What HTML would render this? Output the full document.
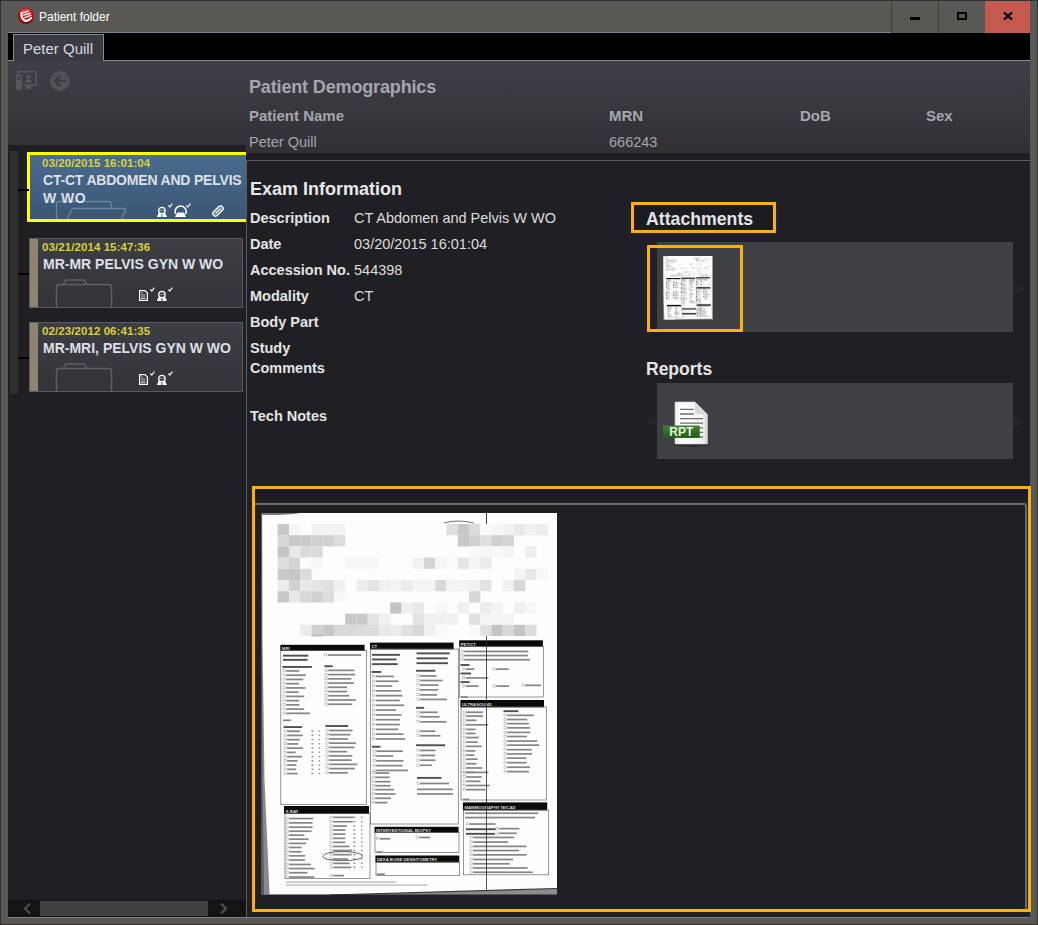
<!DOCTYPE html>
<html><head><meta charset="utf-8">
<style>
*{margin:0;padding:0;box-sizing:border-box}
html,body{width:1038px;height:925px;overflow:hidden;background:#5a5855;font-family:"Liberation Sans",sans-serif}
.a{position:absolute}
.t{position:absolute;white-space:nowrap;line-height:1}
</style></head><body>
<!-- frame -->
<div class="a" style="left:0;top:0;width:1038px;height:925px;border:1px solid #2f3034;background:#5a5855"></div>
<!-- title bar -->
<svg class="a" style="left:18px;top:8px" width="16" height="16" viewBox="0 0 16 16">
 <defs><radialGradient id="rg" cx="0.5" cy="0.3" r="0.75"><stop offset="0" stop-color="#e83a3a"/><stop offset="0.45" stop-color="#cc0a0a"/><stop offset="1" stop-color="#6e0404"/></radialGradient></defs>
 <circle cx="8" cy="8" r="8" fill="url(#rg)"/>
 <ellipse cx="8" cy="2.6" rx="4.5" ry="1.8" fill="#f07070" opacity="0.45"/>
 <path d="M3.6 4.6 Q2.6 9.5 6 12.2 Q9.5 14.2 13.2 10" stroke="#fff" stroke-width="2.2" fill="none" stroke-linecap="round"/>
 <path d="M5.4 4.6 L10.2 3.3 M5.3 7.1 L12.3 5.2 M6.6 9.6 L13 7.3" stroke="#fff" stroke-width="1.5" stroke-linecap="round" opacity="0.9"/>
</svg>
<div class="t" style="left:39px;top:11px;font-size:12px;color:#fff">Patient folder</div>
<div class="a" style="left:891px;top:1px;width:1px;height:32px;background:#3e3d3b"></div>
<div class="a" style="left:938px;top:1px;width:1px;height:32px;background:#3e3d3b"></div>
<div class="a" style="left:985px;top:1px;width:45px;height:32px;background:#c4594f"></div>
<div class="a" style="left:910px;top:17px;width:10px;height:3px;background:#000"></div>
<div class="a" style="left:957px;top:12px;width:10px;height:8px;border:2px solid #000"></div>
<svg class="a" style="left:1003px;top:12px" width="10" height="8" viewBox="0 0 10 8"><path d="M1 0.5 L9 7.5 M9 0.5 L1 7.5" stroke="#000" stroke-width="2.2"/></svg>

<!-- tab strip -->
<div class="a" style="left:8px;top:32px;width:883px;height:1px;background:#7b8692"></div>
<div class="a" style="left:8px;top:33px;width:1022px;height:27px;background:#000"></div>
<div class="a" style="left:8px;top:60px;width:1022px;height:1px;background:#8a8a8c"></div>
<div class="a" style="left:13px;top:34px;width:91px;height:27px;background:#3a3a40;border:1px solid #8a8a8c;border-bottom:none"></div>
<div class="t" style="left:23px;top:41px;font-size:15px;color:#d4dae4">Peter Quill</div>

<!-- content -->
<div class="a" style="left:8px;top:61px;width:1022px;height:856px;background:#202024"></div>
<div class="a" style="left:8px;top:61px;width:1022px;height:92px;background:linear-gradient(#3f3f47,#303035)"></div>
<div class="a" style="left:8px;top:145px;width:238px;height:8px;background:#202024"></div>
<div class="a" style="left:246px;top:153px;width:784px;height:7px;background:#1e1e22"></div>
<div class="a" style="left:246px;top:160px;width:784px;height:1px;background:#5d5c62"></div>
<div class="a" style="left:246px;top:160px;width:1px;height:757px;background:#5d5c62"></div>
<div class="a" style="left:8px;top:917px;width:1022px;height:1px;background:#77818d"></div>

<div id="left" class="a" style="left:0;top:0;width:246px;height:925px;overflow:hidden">
<div class="a" style="left:10px;top:151px;width:8px;height:243px;background:#2f2f30"></div>
<svg class="a" style="left:15px;top:71px" width="22" height="20" viewBox="0 0 22 20"><rect x="3" y="0.8" width="18" height="13.5" rx="1" stroke="#56565c" stroke-width="1.6" fill="none"/><rect x="0.5" y="3" width="7" height="16.3" rx="1.2" fill="#56565c" stroke="#3c3c43" stroke-width="1"/><rect x="2" y="5.5" width="4" height="1.2" fill="#3c3c43"/><rect x="2" y="7.7" width="4" height="1.2" fill="#3c3c43"/><circle cx="13.5" cy="5.8" r="2.2" fill="#56565c"/><path d="M10 11.5 Q10 8.6 13.5 8.6 Q17 8.6 17 11.5 Z" fill="#56565c"/><path d="M11 14.5 H16 L16.8 17.8 H10.2 Z" fill="#56565c"/></svg>
<svg class="a" style="left:50px;top:71px" width="20" height="20" viewBox="0 0 20 20"><circle cx="10" cy="10" r="10" fill="#505057"/><path d="M15.5 10 H5.5 M10 5 L5 10 L10 15" stroke="#3b3b41" stroke-width="2.2" fill="none"/></svg>
<div class="a" style="left:27px;top:152px;width:230px;height:70px;border:3px solid #ffff00;background:linear-gradient(#4b6b8f,#3b5675)"></div>
<div class="a" style="left:18px;top:189px;width:11px;height:2px;background:#000"></div>
<svg class="a" style="left:55px;top:200px" width="75" height="19" viewBox="0 0 75 19"><path d="M1.5 20 V4 Q1.5 1.5 4 1.5 H54 Q56.5 1.5 56.5 4 V7.5" stroke="#6e849c" stroke-width="1.3" fill="none"/><path d="M11.5 20 L16.6 10 Q17.2 8.5 18.7 8.5 H69.5 Q71 8.5 70.5 10 L66 20" stroke="#6e849c" stroke-width="1.3" fill="none"/></svg>
<div class="t" style="left:42px;top:158px;font-size:11.5px;font-weight:bold;color:#d9cf3e;letter-spacing:0.08px">03/20/2015 16:01:04</div>
<div class="t" style="left:43px;top:173px;font-size:14px;font-weight:bold;color:#dde0e6;letter-spacing:-0.2px">CT-CT ABDOMEN AND PELVIS</div>
<div class="t" style="left:43px;top:191px;font-size:14px;font-weight:bold;color:#dde0e6;letter-spacing:0.5px">W WO</div>
<svg class="a" style="left:156px;top:206px" width="12" height="12" viewBox="0 0 12 12"><circle cx="5.9" cy="4.6" r="3.2" stroke="#fff" stroke-width="1.4" fill="none"/><path d="M3.6 4.3 H8.2" stroke="#9aa" stroke-width="0.9"/><path d="M0.8 11 L2.6 7 Q4 8.3 5.4 8.5 V11 Z M11 11 L9.2 7 Q7.8 8.3 6.4 8.5 V11 Z" fill="#fff"/></svg><svg class="a" style="left:168px;top:203px" width="5" height="5" viewBox="0 0 5 5"><path d="M0.4 2.5 L1.8 4 L4.4 0.6" stroke="#f2f2f2" stroke-width="1.2" fill="none"/></svg><svg class="a" style="left:174px;top:205px" width="14" height="13" viewBox="0 0 14 13"><path d="M1.7 9 A5.5 5.5 0 1 1 11.6 9" stroke="#fff" stroke-width="1.5" fill="none"/><path d="M1 12 L3.3 7.6 H10 L12 12 Z" fill="#fff"/></svg><svg class="a" style="left:186px;top:203px" width="5" height="5" viewBox="0 0 5 5"><path d="M0.4 2.5 L1.8 4 L4.4 0.6" stroke="#f2f2f2" stroke-width="1.2" fill="none"/></svg><svg class="a" style="left:212px;top:205px" width="12" height="12" viewBox="0 0 12 12"><g transform="rotate(45 6 6)"><rect x="3.4" y="-0.2" width="5.2" height="12.4" rx="2.6" stroke="#fff" stroke-width="1.3" fill="#9fb0c3" fill-opacity="0.5"/><path d="M6 2.5 V9.5" stroke="#fff" stroke-width="1"/></g></svg>
<div class="a" style="left:29px;top:238px;width:214px;height:70px;border:1px solid #595960;background:linear-gradient(#3d3d44,#333339)"></div>
<div class="a" style="left:30px;top:239px;width:8px;height:68px;background:#8f8474"></div>
<div class="a" style="left:18px;top:273px;width:11px;height:2px;background:#000"></div>
<svg class="a" style="left:55px;top:279px" width="58" height="28" viewBox="0 0 58 28"><path d="M1.5 28 V8 Q1.5 5.5 4 5.5 H54 Q56.5 5.5 56.5 8 V28" stroke="#5f5f64" stroke-width="1.4" fill="none"/><path d="M8.5 5.5 L10 2 Q10.5 1 12 1 H28 Q29.5 1 30 2 L31.5 5.5" stroke="#5f5f64" stroke-width="1.4" fill="none"/></svg>
<div class="t" style="left:42px;top:242px;font-size:11.5px;font-weight:bold;color:#d9cf3e;letter-spacing:0.08px">03/21/2014 15:47:36</div>
<div class="t" style="left:43px;top:257px;font-size:14px;font-weight:bold;color:#dde0e6">MR-MR PELVIS GYN W WO</div>
<svg class="a" style="left:139px;top:290px" width="9" height="11" viewBox="0 0 9 11"><path d="M0.6 0.6 H6 L8.4 3 V10.4 H0.6 Z" stroke="#fff" stroke-width="1.2" fill="none"/><path d="M2 3 H4 M2 5 H6.5 M2 7 H6.5 M2 8.5 H6.5" stroke="#ccc" stroke-width="0.9"/></svg><svg class="a" style="left:150px;top:287px" width="5" height="5" viewBox="0 0 5 5"><path d="M0.4 2.5 L1.8 4 L4.4 0.6" stroke="#f2f2f2" stroke-width="1.2" fill="none"/></svg><svg class="a" style="left:156px;top:290px" width="12" height="12" viewBox="0 0 12 12"><circle cx="5.9" cy="4.6" r="3.2" stroke="#fff" stroke-width="1.4" fill="none"/><path d="M3.6 4.3 H8.2" stroke="#9aa" stroke-width="0.9"/><path d="M0.8 11 L2.6 7 Q4 8.3 5.4 8.5 V11 Z M11 11 L9.2 7 Q7.8 8.3 6.4 8.5 V11 Z" fill="#fff"/></svg><svg class="a" style="left:168px;top:287px" width="5" height="5" viewBox="0 0 5 5"><path d="M0.4 2.5 L1.8 4 L4.4 0.6" stroke="#f2f2f2" stroke-width="1.2" fill="none"/></svg>
<div class="a" style="left:29px;top:322px;width:214px;height:70px;border:1px solid #595960;background:linear-gradient(#3d3d44,#333339)"></div>
<div class="a" style="left:30px;top:323px;width:8px;height:68px;background:#8f8474"></div>
<div class="a" style="left:18px;top:357px;width:11px;height:2px;background:#000"></div>
<svg class="a" style="left:55px;top:363px" width="58" height="28" viewBox="0 0 58 28"><path d="M1.5 28 V8 Q1.5 5.5 4 5.5 H54 Q56.5 5.5 56.5 8 V28" stroke="#5f5f64" stroke-width="1.4" fill="none"/><path d="M8.5 5.5 L10 2 Q10.5 1 12 1 H28 Q29.5 1 30 2 L31.5 5.5" stroke="#5f5f64" stroke-width="1.4" fill="none"/></svg>
<div class="t" style="left:42px;top:326px;font-size:11.5px;font-weight:bold;color:#d9cf3e;letter-spacing:0.08px">02/23/2012 06:41:35</div>
<div class="t" style="left:43px;top:341px;font-size:14px;font-weight:bold;color:#dde0e6">MR-MRI, PELVIS GYN W WO</div>
<svg class="a" style="left:139px;top:374px" width="9" height="11" viewBox="0 0 9 11"><path d="M0.6 0.6 H6 L8.4 3 V10.4 H0.6 Z" stroke="#fff" stroke-width="1.2" fill="none"/><path d="M2 3 H4 M2 5 H6.5 M2 7 H6.5 M2 8.5 H6.5" stroke="#ccc" stroke-width="0.9"/></svg><svg class="a" style="left:150px;top:371px" width="5" height="5" viewBox="0 0 5 5"><path d="M0.4 2.5 L1.8 4 L4.4 0.6" stroke="#f2f2f2" stroke-width="1.2" fill="none"/></svg><svg class="a" style="left:156px;top:374px" width="12" height="12" viewBox="0 0 12 12"><circle cx="5.9" cy="4.6" r="3.2" stroke="#fff" stroke-width="1.4" fill="none"/><path d="M3.6 4.3 H8.2" stroke="#9aa" stroke-width="0.9"/><path d="M0.8 11 L2.6 7 Q4 8.3 5.4 8.5 V11 Z M11 11 L9.2 7 Q7.8 8.3 6.4 8.5 V11 Z" fill="#fff"/></svg><svg class="a" style="left:168px;top:371px" width="5" height="5" viewBox="0 0 5 5"><path d="M0.4 2.5 L1.8 4 L4.4 0.6" stroke="#f2f2f2" stroke-width="1.2" fill="none"/></svg>
<div class="a" style="left:8px;top:900px;width:238px;height:17px;background:#141414"></div>
<div class="a" style="left:40px;top:901px;width:168px;height:15px;background:#404040"></div>
<svg class="a" style="left:22px;top:902px" width="10" height="13" viewBox="0 0 10 13"><path d="M8 1.5 L3 6.5 L8 11.5" stroke="#4f4f4f" stroke-width="2.2" fill="none"/></svg>
<svg class="a" style="left:219px;top:902px" width="10" height="13" viewBox="0 0 10 13"><path d="M2 1.5 L7 6.5 L2 11.5" stroke="#4f4f4f" stroke-width="2.2" fill="none"/></svg>
</div>
<div class="t" style="left:249px;top:78px;font-size:18px;font-weight:700;color:#a6a6ae;letter-spacing:-0.15px">Patient Demographics</div>
<div class="t" style="left:249px;top:108px;font-size:15px;font-weight:700;color:#a6a6ae;">Patient Name</div>
<div class="t" style="left:609px;top:108px;font-size:15px;font-weight:700;color:#a6a6ae;">MRN</div>
<div class="t" style="left:800px;top:108px;font-size:15px;font-weight:700;color:#a6a6ae;">DoB</div>
<div class="t" style="left:926px;top:108px;font-size:15px;font-weight:700;color:#a6a6ae;">Sex</div>
<div class="t" style="left:249px;top:135px;font-size:14.5px;font-weight:400;color:#a6a6ae;">Peter Quill</div>
<div class="t" style="left:609px;top:135px;font-size:14.5px;font-weight:400;color:#a6a6ae;">666243</div>
<div class="t" style="left:250px;top:180px;font-size:18px;font-weight:700;color:#e8e8ea;">Exam Information</div>
<div class="t" style="left:250px;top:211px;font-size:14.5px;font-weight:700;color:#e4e4e6;">Description</div>
<div class="t" style="left:354px;top:211px;font-size:14.5px;font-weight:400;color:#dcdcde;">CT Abdomen and Pelvis W WO</div>
<div class="t" style="left:250px;top:237px;font-size:14.5px;font-weight:700;color:#e4e4e6;">Date</div>
<div class="t" style="left:354px;top:237px;font-size:14.5px;font-weight:400;color:#dcdcde;">03/20/2015 16:01:04</div>
<div class="t" style="left:250px;top:263px;font-size:14.5px;font-weight:700;color:#e4e4e6;">Accession No.</div>
<div class="t" style="left:354px;top:263px;font-size:14.5px;font-weight:400;color:#dcdcde;">544398</div>
<div class="t" style="left:250px;top:289px;font-size:14.5px;font-weight:700;color:#e4e4e6;">Modality</div>
<div class="t" style="left:354px;top:289px;font-size:14.5px;font-weight:400;color:#dcdcde;">CT</div>
<div class="t" style="left:250px;top:315px;font-size:14.5px;font-weight:700;color:#e4e4e6;">Body Part</div>
<div class="t" style="left:250px;top:341px;font-size:14.5px;font-weight:700;color:#e4e4e6;">Study</div>
<div class="t" style="left:250px;top:361px;font-size:14.5px;font-weight:700;color:#e4e4e6;">Comments</div>
<div class="t" style="left:250px;top:409px;font-size:14.5px;font-weight:700;color:#e4e4e6;">Tech Notes</div>
<div class="a" style="left:631px;top:202px;width:145px;height:31px;border:3px solid #fcb00a;background:#1c1c20"></div>
<div class="t" style="left:646px;top:211px;font-size:17.7px;font-weight:700;color:#e4e4e6;">Attachments</div>
<div class="a" style="left:657px;top:242px;width:356px;height:90px;background:#3f3f46"></div>
<div class="a" style="left:647px;top:245px;width:96px;height:87px;border:3px solid #fcb00a"></div>
<svg class="a" style="left:663px;top:256px" width="49.5" height="64" viewBox="0 0 296 383" preserveAspectRatio="none"><rect x="0.00" y="0.00" width="296.00" height="383.00" fill="#fdfdfd"/>
<rect x="16.70" y="11.00" width="11.30" height="11.25" fill="#c8c8c8"/>
<rect x="27.95" y="11.00" width="11.30" height="11.25" fill="#f5f5f5"/>
<rect x="50.45" y="11.00" width="11.30" height="11.25" fill="#f3f3f3"/>
<rect x="61.70" y="11.00" width="11.30" height="11.25" fill="#f3f3f3"/>
<rect x="72.95" y="11.00" width="11.30" height="11.25" fill="#f3f3f3"/>
<rect x="185.45" y="11.00" width="11.30" height="11.25" fill="#dedede"/>
<rect x="196.70" y="11.00" width="11.30" height="11.25" fill="#c8c8c8"/>
<rect x="207.95" y="11.00" width="11.30" height="11.25" fill="#dcdcdc"/>
<rect x="219.20" y="11.00" width="11.30" height="11.25" fill="#fafafa"/>
<rect x="230.45" y="11.00" width="11.30" height="11.25" fill="#f6f6f6"/>
<rect x="241.70" y="11.00" width="11.30" height="11.25" fill="#f2f2f2"/>
<rect x="252.95" y="11.00" width="11.30" height="11.25" fill="#e8e8e8"/>
<rect x="264.20" y="11.00" width="11.30" height="11.25" fill="#f0f0f0"/>
<rect x="275.45" y="11.00" width="11.30" height="11.25" fill="#ececec"/>
<rect x="16.70" y="22.20" width="11.30" height="11.25" fill="#d8d8d8"/>
<rect x="27.95" y="22.20" width="11.30" height="11.25" fill="#c8c8c8"/>
<rect x="39.20" y="22.20" width="11.30" height="11.25" fill="#cacaca"/>
<rect x="50.45" y="22.20" width="11.30" height="11.25" fill="#d0d0d0"/>
<rect x="61.70" y="22.20" width="11.30" height="11.25" fill="#d0d0d0"/>
<rect x="72.95" y="22.20" width="11.30" height="11.25" fill="#dcdcdc"/>
<rect x="196.70" y="22.20" width="11.30" height="11.25" fill="#c8c8c8"/>
<rect x="207.95" y="22.20" width="11.30" height="11.25" fill="#d0d0d0"/>
<rect x="219.20" y="22.20" width="11.30" height="11.25" fill="#e0e0e0"/>
<rect x="230.45" y="22.20" width="11.30" height="11.25" fill="#d0d0d0"/>
<rect x="241.70" y="22.20" width="11.30" height="11.25" fill="#d4d4d4"/>
<rect x="16.70" y="33.40" width="11.30" height="11.25" fill="#c4c4c4"/>
<rect x="27.95" y="33.40" width="11.30" height="11.25" fill="#e8e8e8"/>
<rect x="39.20" y="33.40" width="11.30" height="11.25" fill="#dadada"/>
<rect x="50.45" y="33.40" width="11.30" height="11.25" fill="#dadada"/>
<rect x="207.95" y="33.40" width="11.30" height="11.25" fill="#fafafa"/>
<rect x="219.20" y="33.40" width="11.30" height="11.25" fill="#f6f6f6"/>
<rect x="230.45" y="33.40" width="11.30" height="11.25" fill="#f8f8f8"/>
<rect x="241.70" y="33.40" width="11.30" height="11.25" fill="#f4f4f4"/>
<rect x="264.20" y="33.40" width="11.30" height="11.25" fill="#eeeeee"/>
<rect x="16.70" y="44.60" width="11.30" height="11.25" fill="#dedede"/>
<rect x="27.95" y="44.60" width="11.30" height="11.25" fill="#d4d4d4"/>
<rect x="39.20" y="44.60" width="11.30" height="11.25" fill="#fcfcfc"/>
<rect x="50.45" y="44.60" width="11.30" height="11.25" fill="#f6f6f6"/>
<rect x="84.20" y="44.60" width="11.30" height="11.25" fill="#f6f6f6"/>
<rect x="95.45" y="44.60" width="11.30" height="11.25" fill="#f6f6f6"/>
<rect x="106.70" y="44.60" width="11.30" height="11.25" fill="#f6f6f6"/>
<rect x="151.70" y="44.60" width="11.30" height="11.25" fill="#f2f2f2"/>
<rect x="162.95" y="44.60" width="11.30" height="11.25" fill="#d4d4d4"/>
<rect x="174.20" y="44.60" width="11.30" height="11.25" fill="#f6f6f6"/>
<rect x="185.45" y="44.60" width="11.30" height="11.25" fill="#fafafa"/>
<rect x="196.70" y="44.60" width="11.30" height="11.25" fill="#e6e6e6"/>
<rect x="207.95" y="44.60" width="11.30" height="11.25" fill="#f4f4f4"/>
<rect x="219.20" y="44.60" width="11.30" height="11.25" fill="#ececec"/>
<rect x="16.70" y="55.80" width="11.30" height="11.25" fill="#cacaca"/>
<rect x="27.95" y="55.80" width="11.30" height="11.25" fill="#c6c6c6"/>
<rect x="39.20" y="55.80" width="11.30" height="11.25" fill="#dadada"/>
<rect x="252.95" y="55.80" width="11.30" height="11.25" fill="#f4f4f4"/>
<rect x="264.20" y="55.80" width="11.30" height="11.25" fill="#e8e8e8"/>
<rect x="275.45" y="55.80" width="11.30" height="11.25" fill="#f8f8f8"/>
<rect x="16.70" y="67.00" width="11.30" height="11.25" fill="#ececec"/>
<rect x="27.95" y="67.00" width="11.30" height="11.25" fill="#d0d0d0"/>
<rect x="39.20" y="67.00" width="11.30" height="11.25" fill="#e8e8e8"/>
<rect x="50.45" y="67.00" width="11.30" height="11.25" fill="#e4e4e4"/>
<rect x="61.70" y="67.00" width="11.30" height="11.25" fill="#e0e0e0"/>
<rect x="72.95" y="67.00" width="11.30" height="11.25" fill="#f0f0f0"/>
<rect x="95.45" y="67.00" width="11.30" height="11.25" fill="#eeeeee"/>
<rect x="106.70" y="67.00" width="11.30" height="11.25" fill="#e4e4e4"/>
<rect x="117.95" y="67.00" width="11.30" height="11.25" fill="#f0f0f0"/>
<rect x="129.20" y="67.00" width="11.30" height="11.25" fill="#f4f4f4"/>
<rect x="140.45" y="67.00" width="11.30" height="11.25" fill="#ececec"/>
<rect x="151.70" y="67.00" width="11.30" height="11.25" fill="#f4f4f4"/>
<rect x="162.95" y="67.00" width="11.30" height="11.25" fill="#f4f4f4"/>
<rect x="174.20" y="67.00" width="11.30" height="11.25" fill="#d8d8d8"/>
<rect x="185.45" y="67.00" width="11.30" height="11.25" fill="#f4f4f4"/>
<rect x="196.70" y="67.00" width="11.30" height="11.25" fill="#f4f4f4"/>
<rect x="207.95" y="67.00" width="11.30" height="11.25" fill="#f2f2f2"/>
<rect x="219.20" y="67.00" width="11.30" height="11.25" fill="#e2e2e2"/>
<rect x="241.70" y="67.00" width="11.30" height="11.25" fill="#f0f0f0"/>
<rect x="252.95" y="67.00" width="11.30" height="11.25" fill="#d8d8d8"/>
<rect x="16.70" y="78.20" width="11.30" height="11.25" fill="#c8c8c8"/>
<rect x="27.95" y="78.20" width="11.30" height="11.25" fill="#e8e8e8"/>
<rect x="39.20" y="78.20" width="11.30" height="11.25" fill="#d8d8d8"/>
<rect x="50.45" y="78.20" width="11.30" height="11.25" fill="#d0d0d0"/>
<rect x="61.70" y="78.20" width="11.30" height="11.25" fill="#dcdcdc"/>
<rect x="72.95" y="78.20" width="11.30" height="11.25" fill="#f8f8f8"/>
<rect x="207.95" y="78.20" width="11.30" height="11.25" fill="#d8d8d8"/>
<rect x="129.20" y="89.40" width="11.30" height="11.25" fill="#c4c4c4"/>
<rect x="140.45" y="89.40" width="11.30" height="11.25" fill="#f0f0f0"/>
<rect x="151.70" y="89.40" width="11.30" height="11.25" fill="#e8e8e8"/>
<rect x="174.20" y="89.40" width="11.30" height="11.25" fill="#f6f6f6"/>
<rect x="196.70" y="89.40" width="11.30" height="11.25" fill="#f0f0f0"/>
<rect x="219.20" y="89.40" width="11.30" height="11.25" fill="#ececec"/>
<rect x="230.45" y="89.40" width="11.30" height="11.25" fill="#f4f4f4"/>
<rect x="252.95" y="89.40" width="11.30" height="11.25" fill="#f0f0f0"/>
<rect x="264.20" y="89.40" width="11.30" height="11.25" fill="#f8f8f8"/>
<rect x="84.20" y="100.60" width="11.30" height="11.25" fill="#c8c8c8"/>
<rect x="95.45" y="100.60" width="11.30" height="11.25" fill="#c8c8c8"/>
<rect x="106.70" y="100.60" width="11.30" height="11.25" fill="#e4e4e4"/>
<rect x="117.95" y="100.60" width="11.30" height="11.25" fill="#f0f0f0"/>
<rect x="151.70" y="100.60" width="11.30" height="11.25" fill="#e4e4e4"/>
<rect x="162.95" y="100.60" width="11.30" height="11.25" fill="#f0f0f0"/>
<rect x="174.20" y="100.60" width="11.30" height="11.25" fill="#f0f0f0"/>
<rect x="185.45" y="100.60" width="11.30" height="11.25" fill="#f0f0f0"/>
<rect x="207.95" y="100.60" width="11.30" height="11.25" fill="#e0e0e0"/>
<rect x="219.20" y="100.60" width="11.30" height="11.25" fill="#f4f4f4"/>
<rect x="230.45" y="100.60" width="11.30" height="11.25" fill="#f4f4f4"/>
<rect x="241.70" y="100.60" width="11.30" height="11.25" fill="#f4f4f4"/>
<rect x="39.20" y="111.80" width="11.30" height="11.25" fill="#ececec"/>
<rect x="50.45" y="111.80" width="11.30" height="11.25" fill="#d0d0d0"/>
<rect x="61.70" y="111.80" width="11.30" height="11.25" fill="#c8c8c8"/>
<rect x="72.95" y="111.80" width="11.30" height="11.25" fill="#d8d8d8"/>
<rect x="84.20" y="111.80" width="11.30" height="11.25" fill="#d8d8d8"/>
<rect x="95.45" y="111.80" width="11.30" height="11.25" fill="#dcdcdc"/>
<rect x="106.70" y="111.80" width="11.30" height="11.25" fill="#dcdcdc"/>
<rect x="117.95" y="111.80" width="11.30" height="11.25" fill="#e8e8e8"/>
<rect x="129.20" y="111.80" width="11.30" height="11.25" fill="#ececec"/>
<rect x="140.45" y="111.80" width="11.30" height="11.25" fill="#e0e0e0"/>
<rect x="151.70" y="111.80" width="11.30" height="11.25" fill="#d8d8d8"/>
<rect x="162.95" y="111.80" width="11.30" height="11.25" fill="#f0f0f0"/>
<rect x="174.20" y="111.80" width="11.30" height="11.25" fill="#fafafa"/>
<rect x="207.95" y="111.80" width="11.30" height="11.25" fill="#fafafa"/>
<rect x="219.20" y="111.80" width="11.30" height="11.25" fill="#e0e0e0"/>
<rect x="230.45" y="111.80" width="11.30" height="11.25" fill="#c4c4c4"/>
<rect x="241.70" y="111.80" width="11.30" height="11.25" fill="#d8d8d8"/>
<rect x="252.95" y="111.80" width="11.30" height="11.25" fill="#c4c4c4"/>
<rect x="264.20" y="111.80" width="11.30" height="11.25" fill="#dcdcdc"/>
<rect x="50.45" y="121.80" width="11.25" height="1.60" fill="#b8b8b8"/>
<line x1="225.50" y1="0.00" x2="225.50" y2="11.00" stroke="#222" stroke-width="0.9"/>
<path d="M183 10 Q197 6 213 10" fill="none" stroke="#333" stroke-width="0.7"/>
<rect x="19.30" y="131.80" width="84.30" height="6.20" fill="#0a0a0a"/>

<rect x="19.80" y="137.50" width="85.70" height="154.20" fill="none" stroke="#6a6a6a" stroke-width="0.7"/>
<rect x="22.00" y="141.70" width="25.30" height="1.90" fill="#505050"/>
<rect x="22.00" y="145.90" width="24.60" height="1.90" fill="#505050"/>
<rect x="21.50" y="153.00" width="29.30" height="1.90" fill="#505050"/>
<rect x="22.00" y="156.71" width="2.2" height="2.2" fill="none" stroke="#909090" stroke-width="0.45"/>
<rect x="25.20" y="157.11" width="13.01" height="1.70" fill="#858585"/>
<rect x="22.00" y="160.95" width="2.2" height="2.2" fill="none" stroke="#909090" stroke-width="0.45"/>
<rect x="25.20" y="161.35" width="19.50" height="1.70" fill="#858585"/>
<rect x="22.00" y="165.19" width="2.2" height="2.2" fill="none" stroke="#909090" stroke-width="0.45"/>
<rect x="25.20" y="165.59" width="17.12" height="1.70" fill="#858585"/>
<rect x="22.00" y="169.43" width="2.2" height="2.2" fill="none" stroke="#909090" stroke-width="0.45"/>
<rect x="25.20" y="169.83" width="12.81" height="1.70" fill="#858585"/>
<rect x="22.00" y="173.67" width="2.2" height="2.2" fill="none" stroke="#909090" stroke-width="0.45"/>
<rect x="25.20" y="174.07" width="19.10" height="1.70" fill="#858585"/>
<rect x="22.00" y="177.90" width="2.2" height="2.2" fill="none" stroke="#909090" stroke-width="0.45"/>
<rect x="25.20" y="178.30" width="12.52" height="1.70" fill="#858585"/>
<rect x="22.00" y="182.14" width="2.2" height="2.2" fill="none" stroke="#909090" stroke-width="0.45"/>
<rect x="25.20" y="182.54" width="18.07" height="1.70" fill="#858585"/>
<rect x="22.00" y="186.38" width="2.2" height="2.2" fill="none" stroke="#909090" stroke-width="0.45"/>
<rect x="25.20" y="186.78" width="12.98" height="1.70" fill="#858585"/>
<rect x="22.00" y="190.62" width="2.2" height="2.2" fill="none" stroke="#909090" stroke-width="0.45"/>
<rect x="25.20" y="191.02" width="13.27" height="1.70" fill="#858585"/>
<rect x="22.00" y="194.86" width="2.2" height="2.2" fill="none" stroke="#909090" stroke-width="0.45"/>
<rect x="25.20" y="195.26" width="17.94" height="1.70" fill="#858585"/>
<rect x="22.00" y="199.09" width="2.2" height="2.2" fill="none" stroke="#909090" stroke-width="0.45"/>
<rect x="25.20" y="199.49" width="23.58" height="1.70" fill="#858585"/>
<rect x="22.00" y="206.46" width="8.12" height="1.70" fill="#858585"/>
<rect x="22.50" y="213.12" width="18.45" height="1.90" fill="#505050"/>
<rect x="23.00" y="216.95" width="2.2" height="2.2" fill="none" stroke="#909090" stroke-width="0.45"/>
<rect x="26.20" y="217.35" width="13.02" height="1.70" fill="#858585"/>
<rect x="23.00" y="221.19" width="2.2" height="2.2" fill="none" stroke="#909090" stroke-width="0.45"/>
<rect x="26.20" y="221.59" width="15.58" height="1.70" fill="#858585"/>
<rect x="23.00" y="225.43" width="2.2" height="2.2" fill="none" stroke="#909090" stroke-width="0.45"/>
<rect x="26.20" y="225.83" width="12.62" height="1.70" fill="#858585"/>
<rect x="23.00" y="229.67" width="2.2" height="2.2" fill="none" stroke="#909090" stroke-width="0.45"/>
<rect x="26.20" y="230.07" width="11.17" height="1.70" fill="#858585"/>
<rect x="23.00" y="233.91" width="2.2" height="2.2" fill="none" stroke="#909090" stroke-width="0.45"/>
<rect x="26.20" y="234.31" width="15.81" height="1.70" fill="#858585"/>
<rect x="23.00" y="238.14" width="2.2" height="2.2" fill="none" stroke="#909090" stroke-width="0.45"/>
<rect x="26.20" y="238.54" width="8.37" height="1.70" fill="#858585"/>
<rect x="23.00" y="242.38" width="2.2" height="2.2" fill="none" stroke="#909090" stroke-width="0.45"/>
<rect x="26.20" y="242.78" width="14.87" height="1.70" fill="#858585"/>
<rect x="23.00" y="246.62" width="2.2" height="2.2" fill="none" stroke="#909090" stroke-width="0.45"/>
<rect x="26.20" y="247.02" width="10.32" height="1.70" fill="#858585"/>
<rect x="23.00" y="250.86" width="2.2" height="2.2" fill="none" stroke="#909090" stroke-width="0.45"/>
<rect x="26.20" y="251.26" width="9.15" height="1.70" fill="#858585"/>
<rect x="23.00" y="255.09" width="2.2" height="2.2" fill="none" stroke="#909090" stroke-width="0.45"/>
<rect x="26.20" y="255.49" width="8.94" height="1.70" fill="#858585"/>
<rect x="23.00" y="259.33" width="2.2" height="2.2" fill="none" stroke="#909090" stroke-width="0.45"/>
<rect x="26.20" y="259.73" width="10.47" height="1.70" fill="#858585"/>
<rect x="50.50" y="217.35" width="1.80" height="1.50" fill="#8a8a8a"/>
<rect x="57.50" y="217.35" width="1.60" height="1.50" fill="#a0a0a0"/>
<rect x="50.50" y="221.59" width="1.80" height="1.50" fill="#8a8a8a"/>
<rect x="57.50" y="221.59" width="1.60" height="1.50" fill="#a0a0a0"/>
<rect x="50.50" y="225.83" width="1.80" height="1.50" fill="#8a8a8a"/>
<rect x="57.50" y="225.83" width="1.60" height="1.50" fill="#a0a0a0"/>
<rect x="50.50" y="230.07" width="1.80" height="1.50" fill="#8a8a8a"/>
<rect x="57.50" y="230.07" width="1.60" height="1.50" fill="#a0a0a0"/>
<rect x="50.50" y="234.31" width="1.80" height="1.50" fill="#8a8a8a"/>
<rect x="57.50" y="234.31" width="1.60" height="1.50" fill="#a0a0a0"/>
<rect x="50.50" y="238.54" width="1.80" height="1.50" fill="#8a8a8a"/>
<rect x="57.50" y="238.54" width="1.60" height="1.50" fill="#a0a0a0"/>
<rect x="50.50" y="242.78" width="1.80" height="1.50" fill="#8a8a8a"/>
<rect x="57.50" y="242.78" width="1.60" height="1.50" fill="#a0a0a0"/>
<rect x="50.50" y="247.02" width="1.80" height="1.50" fill="#8a8a8a"/>
<rect x="57.50" y="247.02" width="1.60" height="1.50" fill="#a0a0a0"/>
<rect x="50.50" y="251.26" width="1.80" height="1.50" fill="#8a8a8a"/>
<rect x="57.50" y="251.26" width="1.60" height="1.50" fill="#a0a0a0"/>
<rect x="50.50" y="255.49" width="1.80" height="1.50" fill="#8a8a8a"/>
<rect x="57.50" y="255.49" width="1.60" height="1.50" fill="#a0a0a0"/>
<rect x="50.50" y="259.73" width="1.80" height="1.50" fill="#8a8a8a"/>
<rect x="57.50" y="259.73" width="1.60" height="1.50" fill="#a0a0a0"/>
<rect x="63.50" y="140.80" width="2.2" height="2.2" fill="none" stroke="#909090" stroke-width="0.45"/>
<rect x="66.70" y="141.20" width="33.63" height="1.70" fill="#858585"/>
<rect x="63.50" y="152.27" width="8.18" height="1.90" fill="#505050"/>
<rect x="64.00" y="156.11" width="2.2" height="2.2" fill="none" stroke="#909090" stroke-width="0.45"/>
<rect x="67.20" y="156.51" width="26.14" height="1.70" fill="#858585"/>
<rect x="64.00" y="160.35" width="2.2" height="2.2" fill="none" stroke="#909090" stroke-width="0.45"/>
<rect x="67.20" y="160.75" width="26.94" height="1.70" fill="#858585"/>
<rect x="64.00" y="164.58" width="2.2" height="2.2" fill="none" stroke="#909090" stroke-width="0.45"/>
<rect x="67.20" y="164.98" width="23.21" height="1.70" fill="#858585"/>
<rect x="64.00" y="168.82" width="2.2" height="2.2" fill="none" stroke="#909090" stroke-width="0.45"/>
<rect x="67.20" y="169.22" width="25.67" height="1.70" fill="#858585"/>
<rect x="64.00" y="173.06" width="2.2" height="2.2" fill="none" stroke="#909090" stroke-width="0.45"/>
<rect x="67.20" y="173.46" width="18.88" height="1.70" fill="#858585"/>
<rect x="64.00" y="177.30" width="2.2" height="2.2" fill="none" stroke="#909090" stroke-width="0.45"/>
<rect x="67.20" y="177.70" width="18.83" height="1.70" fill="#858585"/>
<rect x="64.00" y="181.54" width="2.2" height="2.2" fill="none" stroke="#909090" stroke-width="0.45"/>
<rect x="67.20" y="181.94" width="20.88" height="1.70" fill="#858585"/>
<rect x="64.00" y="185.77" width="2.2" height="2.2" fill="none" stroke="#909090" stroke-width="0.45"/>
<rect x="67.20" y="186.17" width="27.53" height="1.70" fill="#858585"/>
<rect x="64.00" y="190.01" width="2.2" height="2.2" fill="none" stroke="#909090" stroke-width="0.45"/>
<rect x="67.20" y="190.41" width="23.99" height="1.70" fill="#858585"/>
<rect x="64.50" y="212.06" width="22.63" height="1.90" fill="#505050"/>
<rect x="65.00" y="216.20" width="2.2" height="2.2" fill="none" stroke="#909090" stroke-width="0.45"/>
<rect x="68.20" y="216.60" width="23.37" height="1.70" fill="#858585"/>
<rect x="65.00" y="220.43" width="2.2" height="2.2" fill="none" stroke="#909090" stroke-width="0.45"/>
<rect x="68.20" y="220.83" width="21.25" height="1.70" fill="#858585"/>
<rect x="65.00" y="224.67" width="2.2" height="2.2" fill="none" stroke="#909090" stroke-width="0.45"/>
<rect x="68.20" y="225.07" width="18.80" height="1.70" fill="#858585"/>
<rect x="65.00" y="228.91" width="2.2" height="2.2" fill="none" stroke="#909090" stroke-width="0.45"/>
<rect x="68.20" y="229.31" width="26.71" height="1.70" fill="#858585"/>
<rect x="65.00" y="233.15" width="2.2" height="2.2" fill="none" stroke="#909090" stroke-width="0.45"/>
<rect x="68.20" y="233.55" width="25.18" height="1.70" fill="#858585"/>
<rect x="65.00" y="237.39" width="2.2" height="2.2" fill="none" stroke="#909090" stroke-width="0.45"/>
<rect x="68.20" y="237.79" width="17.91" height="1.70" fill="#858585"/>
<rect x="65.00" y="241.62" width="2.2" height="2.2" fill="none" stroke="#909090" stroke-width="0.45"/>
<rect x="68.20" y="242.02" width="23.19" height="1.70" fill="#858585"/>
<rect x="65.00" y="245.86" width="2.2" height="2.2" fill="none" stroke="#909090" stroke-width="0.45"/>
<rect x="68.20" y="246.26" width="22.40" height="1.70" fill="#858585"/>
<rect x="65.00" y="250.10" width="2.2" height="2.2" fill="none" stroke="#909090" stroke-width="0.45"/>
<rect x="68.20" y="250.50" width="28.00" height="1.70" fill="#858585"/>
<rect x="65.00" y="254.34" width="2.2" height="2.2" fill="none" stroke="#909090" stroke-width="0.45"/>
<rect x="68.20" y="254.74" width="25.67" height="1.70" fill="#858585"/>
<rect x="65.00" y="258.58" width="2.2" height="2.2" fill="none" stroke="#909090" stroke-width="0.45"/>
<rect x="68.20" y="258.98" width="18.61" height="1.70" fill="#858585"/>
<rect x="109.00" y="129.60" width="83.60" height="6.80" fill="#0a0a0a"/>

<rect x="109.50" y="136.00" width="87.80" height="175.00" fill="none" stroke="#6a6a6a" stroke-width="0.7"/>
<rect x="111.00" y="140.90" width="27.92" height="1.90" fill="#505050"/>
<rect x="111.00" y="145.50" width="24.47" height="1.90" fill="#505050"/>
<rect x="111.00" y="150.20" width="25.67" height="1.90" fill="#505050"/>
<rect x="110.50" y="158.02" width="9.76" height="1.90" fill="#505050"/>
<rect x="111.50" y="162.16" width="2.2" height="2.2" fill="none" stroke="#909090" stroke-width="0.45"/>
<rect x="114.70" y="162.56" width="18.13" height="1.70" fill="#858585"/>
<rect x="111.50" y="166.98" width="2.2" height="2.2" fill="none" stroke="#909090" stroke-width="0.45"/>
<rect x="114.70" y="167.38" width="22.85" height="1.70" fill="#858585"/>
<rect x="111.50" y="171.79" width="2.2" height="2.2" fill="none" stroke="#909090" stroke-width="0.45"/>
<rect x="114.70" y="172.19" width="16.55" height="1.70" fill="#858585"/>
<rect x="111.50" y="176.60" width="2.2" height="2.2" fill="none" stroke="#909090" stroke-width="0.45"/>
<rect x="114.70" y="177.00" width="25.36" height="1.70" fill="#858585"/>
<rect x="111.50" y="181.42" width="2.2" height="2.2" fill="none" stroke="#909090" stroke-width="0.45"/>
<rect x="114.70" y="181.82" width="26.70" height="1.70" fill="#858585"/>
<rect x="111.50" y="186.23" width="2.2" height="2.2" fill="none" stroke="#909090" stroke-width="0.45"/>
<rect x="114.70" y="186.63" width="24.02" height="1.70" fill="#858585"/>
<rect x="111.50" y="191.04" width="2.2" height="2.2" fill="none" stroke="#909090" stroke-width="0.45"/>
<rect x="114.70" y="191.44" width="28.26" height="1.70" fill="#858585"/>
<rect x="111.50" y="195.85" width="2.2" height="2.2" fill="none" stroke="#909090" stroke-width="0.45"/>
<rect x="114.70" y="196.25" width="20.39" height="1.70" fill="#858585"/>
<rect x="111.50" y="200.67" width="2.2" height="2.2" fill="none" stroke="#909090" stroke-width="0.45"/>
<rect x="114.70" y="201.07" width="25.73" height="1.70" fill="#858585"/>
<rect x="111.50" y="205.48" width="2.2" height="2.2" fill="none" stroke="#909090" stroke-width="0.45"/>
<rect x="114.70" y="205.88" width="24.32" height="1.70" fill="#858585"/>
<rect x="111.50" y="210.29" width="2.2" height="2.2" fill="none" stroke="#909090" stroke-width="0.45"/>
<rect x="114.70" y="210.69" width="24.12" height="1.70" fill="#858585"/>
<rect x="111.50" y="215.11" width="2.2" height="2.2" fill="none" stroke="#909090" stroke-width="0.45"/>
<rect x="114.70" y="215.51" width="22.39" height="1.70" fill="#858585"/>
<rect x="111.50" y="219.92" width="2.2" height="2.2" fill="none" stroke="#909090" stroke-width="0.45"/>
<rect x="114.70" y="220.32" width="27.76" height="1.70" fill="#858585"/>
<rect x="111.50" y="224.73" width="2.2" height="2.2" fill="none" stroke="#909090" stroke-width="0.45"/>
<rect x="114.70" y="225.13" width="29.23" height="1.70" fill="#858585"/>
<rect x="111.00" y="232.79" width="8.47" height="1.90" fill="#505050"/>
<rect x="112.00" y="236.93" width="2.2" height="2.2" fill="none" stroke="#909090" stroke-width="0.45"/>
<rect x="115.20" y="237.33" width="26.63" height="1.70" fill="#858585"/>
<rect x="112.00" y="241.75" width="2.2" height="2.2" fill="none" stroke="#909090" stroke-width="0.45"/>
<rect x="115.20" y="242.15" width="16.97" height="1.70" fill="#858585"/>
<rect x="112.00" y="246.56" width="2.2" height="2.2" fill="none" stroke="#909090" stroke-width="0.45"/>
<rect x="115.20" y="246.96" width="27.22" height="1.70" fill="#858585"/>
<rect x="112.00" y="251.37" width="2.2" height="2.2" fill="none" stroke="#909090" stroke-width="0.45"/>
<rect x="115.20" y="251.77" width="26.35" height="1.70" fill="#858585"/>
<rect x="112.00" y="256.18" width="2.2" height="2.2" fill="none" stroke="#909090" stroke-width="0.45"/>
<rect x="115.20" y="256.58" width="31.89" height="1.70" fill="#858585"/>
<rect x="155.50" y="139.41" width="33.29" height="1.90" fill="#505050"/>
<rect x="155.50" y="144.40" width="31.14" height="1.90" fill="#505050"/>
<rect x="155.50" y="149.24" width="31.54" height="1.90" fill="#505050"/>
<rect x="155.00" y="156.81" width="19.34" height="1.90" fill="#505050"/>
<rect x="156.00" y="161.71" width="2.2" height="2.2" fill="none" stroke="#909090" stroke-width="0.45"/>
<rect x="159.20" y="162.11" width="16.32" height="1.70" fill="#858585"/>
<rect x="156.00" y="166.25" width="2.2" height="2.2" fill="none" stroke="#909090" stroke-width="0.45"/>
<rect x="159.20" y="166.65" width="22.46" height="1.70" fill="#858585"/>
<rect x="156.00" y="170.79" width="2.2" height="2.2" fill="none" stroke="#909090" stroke-width="0.45"/>
<rect x="159.20" y="171.19" width="18.35" height="1.70" fill="#858585"/>
<rect x="156.00" y="175.63" width="2.2" height="2.2" fill="none" stroke="#909090" stroke-width="0.45"/>
<rect x="159.20" y="176.03" width="17.64" height="1.70" fill="#858585"/>
<rect x="156.00" y="180.63" width="2.2" height="2.2" fill="none" stroke="#909090" stroke-width="0.45"/>
<rect x="159.20" y="181.03" width="16.83" height="1.70" fill="#858585"/>
<rect x="156.00" y="185.17" width="2.2" height="2.2" fill="none" stroke="#909090" stroke-width="0.45"/>
<rect x="159.20" y="185.57" width="26.76" height="1.70" fill="#858585"/>
<rect x="155.00" y="193.89" width="8.13" height="1.90" fill="#505050"/>
<rect x="156.00" y="198.03" width="2.2" height="2.2" fill="none" stroke="#909090" stroke-width="0.45"/>
<rect x="159.20" y="198.43" width="17.47" height="1.70" fill="#858585"/>
<rect x="156.00" y="202.57" width="2.2" height="2.2" fill="none" stroke="#909090" stroke-width="0.45"/>
<rect x="159.20" y="202.97" width="19.47" height="1.70" fill="#858585"/>
<rect x="156.00" y="207.57" width="2.2" height="2.2" fill="none" stroke="#909090" stroke-width="0.45"/>
<rect x="159.20" y="207.97" width="26.20" height="1.70" fill="#858585"/>
<rect x="156.00" y="216.95" width="2.2" height="2.2" fill="none" stroke="#909090" stroke-width="0.45"/>
<rect x="159.20" y="217.35" width="15.13" height="1.70" fill="#858585"/>
<rect x="156.00" y="221.49" width="2.2" height="2.2" fill="none" stroke="#909090" stroke-width="0.45"/>
<rect x="159.20" y="221.89" width="20.29" height="1.70" fill="#858585"/>
<rect x="155.00" y="231.28" width="29.10" height="1.90" fill="#505050"/>
<rect x="156.00" y="236.18" width="2.2" height="2.2" fill="none" stroke="#909090" stroke-width="0.45"/>
<rect x="159.20" y="236.58" width="15.30" height="1.70" fill="#858585"/>
<rect x="156.00" y="241.17" width="2.2" height="2.2" fill="none" stroke="#909090" stroke-width="0.45"/>
<rect x="159.20" y="241.57" width="14.92" height="1.70" fill="#858585"/>
<rect x="156.00" y="246.01" width="2.2" height="2.2" fill="none" stroke="#909090" stroke-width="0.45"/>
<rect x="159.20" y="246.41" width="15.18" height="1.70" fill="#858585"/>
<rect x="156.00" y="251.01" width="2.2" height="2.2" fill="none" stroke="#909090" stroke-width="0.45"/>
<rect x="159.20" y="251.41" width="11.67" height="1.70" fill="#858585"/>
<rect x="156.00" y="263.94" width="24.42" height="1.90" fill="#505050"/>
<rect x="156.00" y="269.24" width="2.2" height="2.2" fill="none" stroke="#909090" stroke-width="0.45"/>
<rect x="159.20" y="269.64" width="28.72" height="1.70" fill="#858585"/>
<rect x="156.00" y="275.50" width="35.77" height="1.70" fill="#858585"/>
<rect x="156.00" y="280.12" width="35.92" height="1.70" fill="#858585"/>
<rect x="111.00" y="258.77" width="2.2" height="2.2" fill="none" stroke="#909090" stroke-width="0.45"/>
<rect x="114.20" y="259.17" width="14.11" height="1.70" fill="#858585"/>
<rect x="111.00" y="263.10" width="2.2" height="2.2" fill="none" stroke="#909090" stroke-width="0.45"/>
<rect x="114.20" y="263.50" width="14.47" height="1.70" fill="#858585"/>
<rect x="111.00" y="267.44" width="2.2" height="2.2" fill="none" stroke="#909090" stroke-width="0.45"/>
<rect x="114.20" y="267.84" width="15.25" height="1.70" fill="#858585"/>
<rect x="111.00" y="271.48" width="2.2" height="2.2" fill="none" stroke="#909090" stroke-width="0.45"/>
<rect x="114.20" y="271.88" width="15.27" height="1.70" fill="#858585"/>
<rect x="111.00" y="275.39" width="2.2" height="2.2" fill="none" stroke="#909090" stroke-width="0.45"/>
<rect x="114.20" y="275.79" width="18.79" height="1.70" fill="#858585"/>
<rect x="111.00" y="279.72" width="2.2" height="2.2" fill="none" stroke="#909090" stroke-width="0.45"/>
<rect x="114.20" y="280.12" width="20.25" height="1.70" fill="#858585"/>
<rect x="111.00" y="284.06" width="2.2" height="2.2" fill="none" stroke="#909090" stroke-width="0.45"/>
<rect x="114.20" y="284.46" width="15.68" height="1.70" fill="#858585"/>
<rect x="111.00" y="288.39" width="2.2" height="2.2" fill="none" stroke="#909090" stroke-width="0.45"/>
<rect x="114.20" y="288.79" width="12.06" height="1.70" fill="#858585"/>
<rect x="198.20" y="127.30" width="83.70" height="6.50" fill="#0a0a0a"/>

<rect x="198.50" y="133.50" width="83.80" height="50.50" fill="none" stroke="#6a6a6a" stroke-width="0.7"/>
<rect x="200.00" y="137.19" width="2.2" height="2.2" fill="none" stroke="#909090" stroke-width="0.45"/>
<rect x="203.20" y="137.59" width="64.19" height="1.70" fill="#858585"/>
<rect x="200.00" y="141.28" width="2.2" height="2.2" fill="none" stroke="#909090" stroke-width="0.45"/>
<rect x="203.20" y="141.68" width="63.69" height="1.70" fill="#858585"/>
<rect x="200.00" y="145.51" width="2.2" height="2.2" fill="none" stroke="#909090" stroke-width="0.45"/>
<rect x="203.20" y="145.91" width="65.66" height="1.70" fill="#858585"/>
<rect x="199.50" y="151.06" width="8.95" height="1.90" fill="#505050"/>
<rect x="201.50" y="154.90" width="2.2" height="2.2" fill="none" stroke="#909090" stroke-width="0.45"/>
<rect x="204.70" y="155.30" width="8.69" height="1.70" fill="#858585"/>
<rect x="232.00" y="154.90" width="2.2" height="2.2" fill="none" stroke="#909090" stroke-width="0.45"/>
<rect x="235.20" y="155.30" width="12.52" height="1.70" fill="#858585"/>
<rect x="199.50" y="159.54" width="10.62" height="1.90" fill="#505050"/>
<rect x="201.50" y="163.68" width="2.2" height="2.2" fill="none" stroke="#909090" stroke-width="0.45"/>
<rect x="204.70" y="164.08" width="22.68" height="1.70" fill="#858585"/>
<rect x="199.50" y="168.16" width="9.05" height="1.90" fill="#505050"/>
<rect x="201.50" y="171.85" width="2.2" height="2.2" fill="none" stroke="#909090" stroke-width="0.45"/>
<rect x="204.70" y="172.25" width="12.90" height="1.70" fill="#858585"/>
<rect x="232.00" y="171.85" width="2.2" height="2.2" fill="none" stroke="#909090" stroke-width="0.45"/>
<rect x="235.20" y="172.25" width="12.78" height="1.70" fill="#858585"/>
<rect x="261.00" y="171.09" width="2.2" height="2.2" fill="none" stroke="#909090" stroke-width="0.45"/>
<rect x="264.20" y="171.49" width="15.87" height="1.70" fill="#858585"/>
<rect x="200.00" y="183.30" width="6.80" height="1.70" fill="#858585"/>
<rect x="199.40" y="187.00" width="83.60" height="7.30" fill="#0a0a0a"/>

<rect x="200.00" y="194.00" width="85.40" height="93.00" fill="none" stroke="#6a6a6a" stroke-width="0.7"/>
<rect x="202.00" y="198.03" width="2.2" height="2.2" fill="none" stroke="#909090" stroke-width="0.45"/>
<rect x="205.20" y="198.43" width="16.63" height="1.70" fill="#858585"/>
<rect x="202.00" y="201.82" width="2.2" height="2.2" fill="none" stroke="#909090" stroke-width="0.45"/>
<rect x="205.20" y="202.22" width="16.78" height="1.70" fill="#858585"/>
<rect x="202.00" y="206.06" width="2.2" height="2.2" fill="none" stroke="#909090" stroke-width="0.45"/>
<rect x="205.20" y="206.46" width="10.28" height="1.70" fill="#858585"/>
<rect x="202.00" y="210.60" width="2.2" height="2.2" fill="none" stroke="#909090" stroke-width="0.45"/>
<rect x="205.20" y="211.00" width="21.95" height="1.70" fill="#858585"/>
<rect x="202.00" y="215.14" width="2.2" height="2.2" fill="none" stroke="#909090" stroke-width="0.45"/>
<rect x="205.20" y="215.54" width="9.37" height="1.70" fill="#858585"/>
<rect x="202.00" y="219.22" width="2.2" height="2.2" fill="none" stroke="#909090" stroke-width="0.45"/>
<rect x="205.20" y="219.62" width="9.48" height="1.70" fill="#858585"/>
<rect x="202.00" y="223.31" width="2.2" height="2.2" fill="none" stroke="#909090" stroke-width="0.45"/>
<rect x="205.20" y="223.71" width="12.59" height="1.70" fill="#858585"/>
<rect x="202.00" y="227.85" width="2.2" height="2.2" fill="none" stroke="#909090" stroke-width="0.45"/>
<rect x="205.20" y="228.25" width="11.57" height="1.70" fill="#858585"/>
<rect x="202.00" y="232.09" width="2.2" height="2.2" fill="none" stroke="#909090" stroke-width="0.45"/>
<rect x="205.20" y="232.49" width="15.48" height="1.70" fill="#858585"/>
<rect x="202.00" y="236.63" width="2.2" height="2.2" fill="none" stroke="#909090" stroke-width="0.45"/>
<rect x="205.20" y="237.03" width="9.16" height="1.70" fill="#858585"/>
<rect x="202.00" y="240.87" width="2.2" height="2.2" fill="none" stroke="#909090" stroke-width="0.45"/>
<rect x="205.20" y="241.27" width="8.01" height="1.70" fill="#858585"/>
<rect x="202.00" y="244.95" width="2.2" height="2.2" fill="none" stroke="#909090" stroke-width="0.45"/>
<rect x="205.20" y="245.35" width="11.33" height="1.70" fill="#858585"/>
<rect x="202.00" y="249.49" width="2.2" height="2.2" fill="none" stroke="#909090" stroke-width="0.45"/>
<rect x="205.20" y="249.89" width="10.23" height="1.70" fill="#858585"/>
<rect x="202.00" y="253.73" width="2.2" height="2.2" fill="none" stroke="#909090" stroke-width="0.45"/>
<rect x="205.20" y="254.13" width="16.00" height="1.70" fill="#858585"/>
<rect x="202.00" y="258.12" width="2.2" height="2.2" fill="none" stroke="#909090" stroke-width="0.45"/>
<rect x="205.20" y="258.52" width="8.56" height="1.70" fill="#858585"/>
<rect x="242.50" y="197.22" width="14.87" height="1.90" fill="#505050"/>
<rect x="243.00" y="201.06" width="2.2" height="2.2" fill="none" stroke="#909090" stroke-width="0.45"/>
<rect x="246.20" y="201.46" width="26.60" height="1.70" fill="#858585"/>
<rect x="243.00" y="205.30" width="2.2" height="2.2" fill="none" stroke="#909090" stroke-width="0.45"/>
<rect x="246.20" y="205.70" width="20.08" height="1.70" fill="#858585"/>
<rect x="243.00" y="209.39" width="2.2" height="2.2" fill="none" stroke="#909090" stroke-width="0.45"/>
<rect x="246.20" y="209.79" width="21.53" height="1.70" fill="#858585"/>
<rect x="243.00" y="213.62" width="2.2" height="2.2" fill="none" stroke="#909090" stroke-width="0.45"/>
<rect x="246.20" y="214.02" width="22.86" height="1.70" fill="#858585"/>
<rect x="243.00" y="218.16" width="2.2" height="2.2" fill="none" stroke="#909090" stroke-width="0.45"/>
<rect x="246.20" y="218.56" width="23.10" height="1.70" fill="#858585"/>
<rect x="243.00" y="222.25" width="2.2" height="2.2" fill="none" stroke="#909090" stroke-width="0.45"/>
<rect x="246.20" y="222.65" width="19.72" height="1.70" fill="#858585"/>
<rect x="243.00" y="226.79" width="2.2" height="2.2" fill="none" stroke="#909090" stroke-width="0.45"/>
<rect x="246.20" y="227.19" width="29.89" height="1.70" fill="#858585"/>
<rect x="243.00" y="230.88" width="2.2" height="2.2" fill="none" stroke="#909090" stroke-width="0.45"/>
<rect x="246.20" y="231.28" width="31.90" height="1.70" fill="#858585"/>
<rect x="243.00" y="235.42" width="2.2" height="2.2" fill="none" stroke="#909090" stroke-width="0.45"/>
<rect x="246.20" y="235.82" width="24.52" height="1.70" fill="#858585"/>
<rect x="243.00" y="239.66" width="2.2" height="2.2" fill="none" stroke="#909090" stroke-width="0.45"/>
<rect x="246.20" y="240.06" width="24.77" height="1.70" fill="#858585"/>
<rect x="243.00" y="243.89" width="2.2" height="2.2" fill="none" stroke="#909090" stroke-width="0.45"/>
<rect x="246.20" y="244.29" width="19.20" height="1.70" fill="#858585"/>
<rect x="243.00" y="248.44" width="2.2" height="2.2" fill="none" stroke="#909090" stroke-width="0.45"/>
<rect x="246.20" y="248.84" width="19.43" height="1.70" fill="#858585"/>
<rect x="243.00" y="252.98" width="2.2" height="2.2" fill="none" stroke="#909090" stroke-width="0.45"/>
<rect x="246.20" y="253.38" width="22.80" height="1.70" fill="#858585"/>
<rect x="243.00" y="257.37" width="2.2" height="2.2" fill="none" stroke="#909090" stroke-width="0.45"/>
<rect x="246.20" y="257.77" width="21.71" height="1.70" fill="#858585"/>
<rect x="202.00" y="258.14" width="2.2" height="2.2" fill="none" stroke="#909090" stroke-width="0.45"/>
<rect x="205.20" y="258.54" width="22.29" height="1.70" fill="#858585"/>
<rect x="202.00" y="262.77" width="2.2" height="2.2" fill="none" stroke="#909090" stroke-width="0.45"/>
<rect x="205.20" y="263.17" width="15.61" height="1.70" fill="#858585"/>
<rect x="202.00" y="267.08" width="2.2" height="2.2" fill="none" stroke="#909090" stroke-width="0.45"/>
<rect x="205.20" y="267.48" width="14.23" height="1.70" fill="#858585"/>
<rect x="202.00" y="271.24" width="2.2" height="2.2" fill="none" stroke="#909090" stroke-width="0.45"/>
<rect x="205.20" y="271.64" width="23.51" height="1.70" fill="#858585"/>
<rect x="202.00" y="275.41" width="2.2" height="2.2" fill="none" stroke="#909090" stroke-width="0.45"/>
<rect x="205.20" y="275.81" width="19.28" height="1.70" fill="#858585"/>
<rect x="202.00" y="285.52" width="6.15" height="1.70" fill="#858585"/>
<rect x="201.90" y="289.40" width="84.30" height="8.00" fill="#0a0a0a"/>

<rect x="202.50" y="297.00" width="85.20" height="64.80" fill="none" stroke="#6a6a6a" stroke-width="0.7"/>
<rect x="204.00" y="299.39" width="73.26" height="1.70" fill="#858585"/>
<rect x="204.00" y="303.71" width="70.16" height="1.70" fill="#858585"/>
<rect x="205.00" y="309.78" width="2.2" height="2.2" fill="none" stroke="#909090" stroke-width="0.45"/>
<rect x="208.20" y="310.18" width="26.22" height="1.70" fill="#858585"/>
<rect x="205.00" y="315.27" width="29.83" height="1.90" fill="#505050"/>
<rect x="205.00" y="319.89" width="28.91" height="1.90" fill="#505050"/>
<rect x="235.00" y="314.40" width="2.2" height="2.2" fill="none" stroke="#909090" stroke-width="0.45"/>
<rect x="238.20" y="314.80" width="20.18" height="1.70" fill="#858585"/>
<rect x="235.00" y="319.03" width="2.2" height="2.2" fill="none" stroke="#909090" stroke-width="0.45"/>
<rect x="238.20" y="319.43" width="17.57" height="1.70" fill="#858585"/>
<rect x="209.00" y="323.19" width="2.2" height="2.2" fill="none" stroke="#909090" stroke-width="0.45"/>
<rect x="212.20" y="323.59" width="41.00" height="1.70" fill="#858585"/>
<rect x="209.00" y="327.81" width="2.2" height="2.2" fill="none" stroke="#909090" stroke-width="0.45"/>
<rect x="212.20" y="328.21" width="35.01" height="1.70" fill="#858585"/>
<rect x="209.00" y="332.13" width="2.2" height="2.2" fill="none" stroke="#909090" stroke-width="0.45"/>
<rect x="212.20" y="332.53" width="53.16" height="1.70" fill="#858585"/>
<rect x="209.00" y="336.29" width="2.2" height="2.2" fill="none" stroke="#909090" stroke-width="0.45"/>
<rect x="212.20" y="336.69" width="45.98" height="1.70" fill="#858585"/>
<rect x="209.00" y="340.61" width="2.2" height="2.2" fill="none" stroke="#909090" stroke-width="0.45"/>
<rect x="212.20" y="341.01" width="53.37" height="1.70" fill="#858585"/>
<rect x="209.00" y="345.23" width="2.2" height="2.2" fill="none" stroke="#909090" stroke-width="0.45"/>
<rect x="212.20" y="345.63" width="39.89" height="1.70" fill="#858585"/>
<rect x="209.00" y="349.55" width="2.2" height="2.2" fill="none" stroke="#909090" stroke-width="0.45"/>
<rect x="212.20" y="349.95" width="36.69" height="1.70" fill="#858585"/>
<rect x="209.00" y="353.71" width="2.2" height="2.2" fill="none" stroke="#909090" stroke-width="0.45"/>
<rect x="212.20" y="354.11" width="54.35" height="1.70" fill="#858585"/>
<rect x="209.00" y="358.03" width="2.2" height="2.2" fill="none" stroke="#909090" stroke-width="0.45"/>
<rect x="212.20" y="358.43" width="59.55" height="1.70" fill="#858585"/>
<rect x="23.00" y="293.00" width="85.00" height="8.00" fill="#0a0a0a"/>

<rect x="24.00" y="300.50" width="85.00" height="64.90" fill="none" stroke="#6a6a6a" stroke-width="0.7"/>
<rect x="25.00" y="304.29" width="2.2" height="2.2" fill="none" stroke="#909090" stroke-width="0.45"/>
<rect x="28.20" y="304.69" width="23.94" height="1.70" fill="#858585"/>
<rect x="25.00" y="308.62" width="2.2" height="2.2" fill="none" stroke="#909090" stroke-width="0.45"/>
<rect x="28.20" y="309.02" width="23.29" height="1.70" fill="#858585"/>
<rect x="25.00" y="312.96" width="2.2" height="2.2" fill="none" stroke="#909090" stroke-width="0.45"/>
<rect x="28.20" y="313.36" width="23.46" height="1.70" fill="#858585"/>
<rect x="25.00" y="317.00" width="2.2" height="2.2" fill="none" stroke="#909090" stroke-width="0.45"/>
<rect x="28.20" y="317.40" width="22.36" height="1.70" fill="#858585"/>
<rect x="25.00" y="320.91" width="2.2" height="2.2" fill="none" stroke="#909090" stroke-width="0.45"/>
<rect x="28.20" y="321.31" width="15.17" height="1.70" fill="#858585"/>
<rect x="25.00" y="324.95" width="2.2" height="2.2" fill="none" stroke="#909090" stroke-width="0.45"/>
<rect x="28.20" y="325.35" width="19.25" height="1.70" fill="#858585"/>
<rect x="25.00" y="329.14" width="2.2" height="2.2" fill="none" stroke="#909090" stroke-width="0.45"/>
<rect x="28.20" y="329.54" width="16.98" height="1.70" fill="#858585"/>
<rect x="25.00" y="333.19" width="2.2" height="2.2" fill="none" stroke="#909090" stroke-width="0.45"/>
<rect x="28.20" y="333.59" width="12.41" height="1.70" fill="#858585"/>
<rect x="25.00" y="337.52" width="2.2" height="2.2" fill="none" stroke="#909090" stroke-width="0.45"/>
<rect x="28.20" y="337.92" width="12.39" height="1.70" fill="#858585"/>
<rect x="25.00" y="341.57" width="2.2" height="2.2" fill="none" stroke="#909090" stroke-width="0.45"/>
<rect x="28.20" y="341.97" width="15.91" height="1.70" fill="#858585"/>
<rect x="25.00" y="345.76" width="2.2" height="2.2" fill="none" stroke="#909090" stroke-width="0.45"/>
<rect x="28.20" y="346.16" width="15.63" height="1.70" fill="#858585"/>
<rect x="25.00" y="350.24" width="2.2" height="2.2" fill="none" stroke="#909090" stroke-width="0.45"/>
<rect x="28.20" y="350.64" width="21.70" height="1.70" fill="#858585"/>
<rect x="25.00" y="354.29" width="2.2" height="2.2" fill="none" stroke="#909090" stroke-width="0.45"/>
<rect x="28.20" y="354.69" width="25.39" height="1.70" fill="#858585"/>
<rect x="25.00" y="358.48" width="2.2" height="2.2" fill="none" stroke="#909090" stroke-width="0.45"/>
<rect x="28.20" y="358.88" width="18.26" height="1.70" fill="#858585"/>
<rect x="25.00" y="362.81" width="2.2" height="2.2" fill="none" stroke="#909090" stroke-width="0.45"/>
<rect x="28.20" y="363.21" width="25.12" height="1.70" fill="#858585"/>
<rect x="69.00" y="303.13" width="2.2" height="2.2" fill="none" stroke="#909090" stroke-width="0.45"/>
<rect x="72.20" y="303.53" width="19.88" height="1.70" fill="#858585"/>
<rect x="69.00" y="307.47" width="2.2" height="2.2" fill="none" stroke="#909090" stroke-width="0.45"/>
<rect x="72.20" y="307.87" width="19.55" height="1.70" fill="#858585"/>
<rect x="69.00" y="311.80" width="2.2" height="2.2" fill="none" stroke="#909090" stroke-width="0.45"/>
<rect x="72.20" y="312.20" width="13.65" height="1.70" fill="#858585"/>
<rect x="69.00" y="315.85" width="2.2" height="2.2" fill="none" stroke="#909090" stroke-width="0.45"/>
<rect x="72.20" y="316.25" width="12.20" height="1.70" fill="#858585"/>
<rect x="69.00" y="319.89" width="2.2" height="2.2" fill="none" stroke="#909090" stroke-width="0.45"/>
<rect x="72.20" y="320.29" width="12.27" height="1.70" fill="#858585"/>
<rect x="69.00" y="324.09" width="2.2" height="2.2" fill="none" stroke="#909090" stroke-width="0.45"/>
<rect x="72.20" y="324.49" width="11.97" height="1.70" fill="#858585"/>
<rect x="69.00" y="328.13" width="2.2" height="2.2" fill="none" stroke="#909090" stroke-width="0.45"/>
<rect x="72.20" y="328.53" width="12.04" height="1.70" fill="#858585"/>
<rect x="69.00" y="332.18" width="2.2" height="2.2" fill="none" stroke="#909090" stroke-width="0.45"/>
<rect x="72.20" y="332.58" width="16.24" height="1.70" fill="#858585"/>
<rect x="69.00" y="336.22" width="2.2" height="2.2" fill="none" stroke="#909090" stroke-width="0.45"/>
<rect x="72.20" y="336.62" width="19.00" height="1.70" fill="#858585"/>
<rect x="69.00" y="340.42" width="2.2" height="2.2" fill="none" stroke="#909090" stroke-width="0.45"/>
<rect x="72.20" y="340.82" width="18.40" height="1.70" fill="#858585"/>
<rect x="69.00" y="344.75" width="2.2" height="2.2" fill="none" stroke="#909090" stroke-width="0.45"/>
<rect x="72.20" y="345.15" width="14.79" height="1.70" fill="#858585"/>
<rect x="69.00" y="349.09" width="2.2" height="2.2" fill="none" stroke="#909090" stroke-width="0.45"/>
<rect x="72.20" y="349.49" width="16.53" height="1.70" fill="#858585"/>
<rect x="69.00" y="353.13" width="2.2" height="2.2" fill="none" stroke="#909090" stroke-width="0.45"/>
<rect x="72.20" y="353.53" width="18.00" height="1.70" fill="#858585"/>
<rect x="69.00" y="361.37" width="2.2" height="2.2" fill="none" stroke="#909090" stroke-width="0.45"/>
<rect x="72.20" y="361.77" width="10.85" height="1.70" fill="#858585"/>
<rect x="92.50" y="303.53" width="1.80" height="1.50" fill="#8a8a8a"/>
<rect x="100.00" y="303.53" width="1.60" height="1.50" fill="#a0a0a0"/>
<rect x="92.50" y="307.87" width="1.80" height="1.50" fill="#8a8a8a"/>
<rect x="100.00" y="307.87" width="1.60" height="1.50" fill="#a0a0a0"/>
<rect x="92.50" y="312.20" width="1.80" height="1.50" fill="#8a8a8a"/>
<rect x="100.00" y="312.20" width="1.60" height="1.50" fill="#a0a0a0"/>
<rect x="92.50" y="316.25" width="1.80" height="1.50" fill="#8a8a8a"/>
<rect x="100.00" y="316.25" width="1.60" height="1.50" fill="#a0a0a0"/>
<rect x="92.50" y="320.29" width="1.80" height="1.50" fill="#8a8a8a"/>
<rect x="100.00" y="320.29" width="1.60" height="1.50" fill="#a0a0a0"/>
<rect x="92.50" y="324.49" width="1.80" height="1.50" fill="#8a8a8a"/>
<rect x="100.00" y="324.49" width="1.60" height="1.50" fill="#a0a0a0"/>
<rect x="92.50" y="328.53" width="1.80" height="1.50" fill="#8a8a8a"/>
<rect x="100.00" y="328.53" width="1.60" height="1.50" fill="#a0a0a0"/>
<rect x="92.50" y="332.58" width="1.80" height="1.50" fill="#8a8a8a"/>
<rect x="100.00" y="332.58" width="1.60" height="1.50" fill="#a0a0a0"/>
<rect x="92.50" y="336.62" width="1.80" height="1.50" fill="#8a8a8a"/>
<rect x="100.00" y="336.62" width="1.60" height="1.50" fill="#a0a0a0"/>
<rect x="92.50" y="340.82" width="1.80" height="1.50" fill="#8a8a8a"/>
<rect x="100.00" y="340.82" width="1.60" height="1.50" fill="#a0a0a0"/>
<rect x="92.50" y="345.15" width="1.80" height="1.50" fill="#8a8a8a"/>
<rect x="100.00" y="345.15" width="1.60" height="1.50" fill="#a0a0a0"/>
<rect x="92.50" y="349.49" width="1.80" height="1.50" fill="#8a8a8a"/>
<rect x="100.00" y="349.49" width="1.60" height="1.50" fill="#a0a0a0"/>
<rect x="92.50" y="353.53" width="1.80" height="1.50" fill="#8a8a8a"/>
<rect x="100.00" y="353.53" width="1.60" height="1.50" fill="#a0a0a0"/>
<path d="M62 343.5 C62 337 101 337 101.5 343.5 C101 349 62 349 62 343.5 Z" fill="none" stroke="#222" stroke-width="0.7"/>
<rect x="113.50" y="313.80" width="84.10" height="6.00" fill="#0a0a0a"/>

<rect x="114.00" y="319.50" width="84.00" height="20.00" fill="none" stroke="#6a6a6a" stroke-width="0.7"/>
<rect x="115.50" y="324.52" width="2.2" height="2.2" fill="none" stroke="#909090" stroke-width="0.45"/>
<rect x="118.70" y="324.92" width="10.66" height="1.70" fill="#858585"/>
<rect x="155.00" y="323.19" width="2.2" height="2.2" fill="none" stroke="#909090" stroke-width="0.45"/>
<rect x="158.20" y="323.59" width="10.91" height="1.70" fill="#858585"/>
<rect x="115.00" y="338.21" width="6.78" height="1.70" fill="#858585"/>
<rect x="114.40" y="342.50" width="83.90" height="7.00" fill="#0a0a0a"/>

<rect x="115.00" y="349.00" width="83.50" height="13.60" fill="none" stroke="#6a6a6a" stroke-width="0.7"/>
<rect x="116.00" y="360.32" width="7.75" height="1.70" fill="#858585"/>
<line x1="225.50" y1="123.00" x2="225.50" y2="382.00" stroke="#2a2a2a" stroke-width="0.8"/>
<rect x="25.00" y="368.50" width="110.00" height="1.20" fill="#b4b4b4"/>
<rect x="25.00" y="371.50" width="142.00" height="1.20" fill="#b4b4b4"/>
<path d="M0 0 L1.2 0 L1.5 127 L3.5 267 L8.6 381.5 L0 381.5 Z" fill="#8a8a8a"/>
<path d="M0 0 L0.8 0 L1 127 L1.5 267 L3 381.5 L0 381.5 Z" fill="#5a5a5a"/>
<path d="M1 0 L39 0 Q24 2.5 1 2 Z" fill="#777"/>
<path d="M69 382 L296 375.5 L296 383 L69 383 Z" fill="#8c8c8c"/>
<path d="M69 382 L296 375.5" fill="none" stroke="#3a3a3a" stroke-width="1.2"/>
<path d="M0 381.5 L296 381.5 L296 383 L0 383 Z" fill="#202024"/></svg>
<svg class="a" style="left:1014px;top:283px" width="11" height="11" viewBox="0 0 11 11"><path d="M0 0 L11 5.5 L0 11 Z" fill="#27272b"/></svg>
<div class="t" style="left:646px;top:361px;font-size:17.5px;font-weight:700;color:#e4e4e6;">Reports</div>
<div class="a" style="left:657px;top:383px;width:356px;height:76px;background:#3f3f46"></div>
<svg class="a" style="left:645px;top:416px" width="11" height="11" viewBox="0 0 11 11"><path d="M11 0 L0 5.5 L11 11 Z" fill="#27272b"/></svg>
<svg class="a" style="left:1014px;top:416px" width="11" height="11" viewBox="0 0 11 11"><path d="M0 0 L11 5.5 L0 11 Z" fill="#27272b"/></svg>

<svg class="a" style="left:660px;top:400px" width="52" height="48" viewBox="0 0 52 48">
<defs><linearGradient id="pg" x1="0" y1="0" x2="1" y2="0"><stop offset="0" stop-color="#e8e8e8"/><stop offset="0.15" stop-color="#ffffff"/><stop offset="0.85" stop-color="#f4f4f4"/><stop offset="1" stop-color="#cfcfcf"/></linearGradient>
<linearGradient id="gg" x1="0" y1="0" x2="0" y2="1"><stop offset="0" stop-color="#3d8430"/><stop offset="1" stop-color="#255a1a"/></linearGradient></defs>
<ellipse cx="31" cy="44.5" rx="18" ry="2.5" fill="#2a2a30" opacity="0.8"/>
<path d="M15 2 H35 L47.5 14.5 V44 H15 Z" fill="url(#pg)" stroke="#d0d0d0" stroke-width="0.6"/>
<path d="M35 2 L35 12.5 Q35 14.5 37 14.5 H47.5 Z" fill="#d8d8d8"/>
<path d="M20 9.4 H33.8 M20 14 H33.8 M20 18.6 H43 M20 23.2 H43 M20 27.8 H43 M20 32.4 H43 M20 37 H43" stroke="#6e6e6e" stroke-width="1.3"/>
<rect x="3" y="25.5" width="36.7" height="12.4" fill="url(#gg)"/>
<text x="21.3" y="36" text-anchor="middle" font-family="Liberation Sans" font-weight="bold" font-size="12" fill="#e6eedd">RPT</text>
</svg>
<div class="a" style="left:255px;top:489px;width:773px;height:10px;background:linear-gradient(#17171b,#202024)"></div>
<div class="a" style="left:252px;top:486px;width:779px;height:426px;border:3px solid #fcb00a"></div>
<div class="a" style="left:255px;top:503px;width:772px;height:406px;border-top:2px solid #6b6b6b;border-right:2px solid #6b6b6b;border-top-right-radius:3px"></div>
<svg class="a" style="left:261px;top:513px" width="296" height="383" viewBox="0 0 296 383"><g><rect x="0.00" y="0.00" width="296.00" height="383.00" fill="#fdfdfd"/>
<rect x="16.70" y="11.00" width="11.30" height="11.25" fill="#c8c8c8"/>
<rect x="27.95" y="11.00" width="11.30" height="11.25" fill="#f5f5f5"/>
<rect x="50.45" y="11.00" width="11.30" height="11.25" fill="#f3f3f3"/>
<rect x="61.70" y="11.00" width="11.30" height="11.25" fill="#f3f3f3"/>
<rect x="72.95" y="11.00" width="11.30" height="11.25" fill="#f3f3f3"/>
<rect x="185.45" y="11.00" width="11.30" height="11.25" fill="#dedede"/>
<rect x="196.70" y="11.00" width="11.30" height="11.25" fill="#c8c8c8"/>
<rect x="207.95" y="11.00" width="11.30" height="11.25" fill="#dcdcdc"/>
<rect x="219.20" y="11.00" width="11.30" height="11.25" fill="#fafafa"/>
<rect x="230.45" y="11.00" width="11.30" height="11.25" fill="#f6f6f6"/>
<rect x="241.70" y="11.00" width="11.30" height="11.25" fill="#f2f2f2"/>
<rect x="252.95" y="11.00" width="11.30" height="11.25" fill="#e8e8e8"/>
<rect x="264.20" y="11.00" width="11.30" height="11.25" fill="#f0f0f0"/>
<rect x="275.45" y="11.00" width="11.30" height="11.25" fill="#ececec"/>
<rect x="16.70" y="22.20" width="11.30" height="11.25" fill="#d8d8d8"/>
<rect x="27.95" y="22.20" width="11.30" height="11.25" fill="#c8c8c8"/>
<rect x="39.20" y="22.20" width="11.30" height="11.25" fill="#cacaca"/>
<rect x="50.45" y="22.20" width="11.30" height="11.25" fill="#d0d0d0"/>
<rect x="61.70" y="22.20" width="11.30" height="11.25" fill="#d0d0d0"/>
<rect x="72.95" y="22.20" width="11.30" height="11.25" fill="#dcdcdc"/>
<rect x="196.70" y="22.20" width="11.30" height="11.25" fill="#c8c8c8"/>
<rect x="207.95" y="22.20" width="11.30" height="11.25" fill="#d0d0d0"/>
<rect x="219.20" y="22.20" width="11.30" height="11.25" fill="#e0e0e0"/>
<rect x="230.45" y="22.20" width="11.30" height="11.25" fill="#d0d0d0"/>
<rect x="241.70" y="22.20" width="11.30" height="11.25" fill="#d4d4d4"/>
<rect x="16.70" y="33.40" width="11.30" height="11.25" fill="#c4c4c4"/>
<rect x="27.95" y="33.40" width="11.30" height="11.25" fill="#e8e8e8"/>
<rect x="39.20" y="33.40" width="11.30" height="11.25" fill="#dadada"/>
<rect x="50.45" y="33.40" width="11.30" height="11.25" fill="#dadada"/>
<rect x="207.95" y="33.40" width="11.30" height="11.25" fill="#fafafa"/>
<rect x="219.20" y="33.40" width="11.30" height="11.25" fill="#f6f6f6"/>
<rect x="230.45" y="33.40" width="11.30" height="11.25" fill="#f8f8f8"/>
<rect x="241.70" y="33.40" width="11.30" height="11.25" fill="#f4f4f4"/>
<rect x="264.20" y="33.40" width="11.30" height="11.25" fill="#eeeeee"/>
<rect x="16.70" y="44.60" width="11.30" height="11.25" fill="#dedede"/>
<rect x="27.95" y="44.60" width="11.30" height="11.25" fill="#d4d4d4"/>
<rect x="39.20" y="44.60" width="11.30" height="11.25" fill="#fcfcfc"/>
<rect x="50.45" y="44.60" width="11.30" height="11.25" fill="#f6f6f6"/>
<rect x="84.20" y="44.60" width="11.30" height="11.25" fill="#f6f6f6"/>
<rect x="95.45" y="44.60" width="11.30" height="11.25" fill="#f6f6f6"/>
<rect x="106.70" y="44.60" width="11.30" height="11.25" fill="#f6f6f6"/>
<rect x="151.70" y="44.60" width="11.30" height="11.25" fill="#f2f2f2"/>
<rect x="162.95" y="44.60" width="11.30" height="11.25" fill="#d4d4d4"/>
<rect x="174.20" y="44.60" width="11.30" height="11.25" fill="#f6f6f6"/>
<rect x="185.45" y="44.60" width="11.30" height="11.25" fill="#fafafa"/>
<rect x="196.70" y="44.60" width="11.30" height="11.25" fill="#e6e6e6"/>
<rect x="207.95" y="44.60" width="11.30" height="11.25" fill="#f4f4f4"/>
<rect x="219.20" y="44.60" width="11.30" height="11.25" fill="#ececec"/>
<rect x="16.70" y="55.80" width="11.30" height="11.25" fill="#cacaca"/>
<rect x="27.95" y="55.80" width="11.30" height="11.25" fill="#c6c6c6"/>
<rect x="39.20" y="55.80" width="11.30" height="11.25" fill="#dadada"/>
<rect x="252.95" y="55.80" width="11.30" height="11.25" fill="#f4f4f4"/>
<rect x="264.20" y="55.80" width="11.30" height="11.25" fill="#e8e8e8"/>
<rect x="275.45" y="55.80" width="11.30" height="11.25" fill="#f8f8f8"/>
<rect x="16.70" y="67.00" width="11.30" height="11.25" fill="#ececec"/>
<rect x="27.95" y="67.00" width="11.30" height="11.25" fill="#d0d0d0"/>
<rect x="39.20" y="67.00" width="11.30" height="11.25" fill="#e8e8e8"/>
<rect x="50.45" y="67.00" width="11.30" height="11.25" fill="#e4e4e4"/>
<rect x="61.70" y="67.00" width="11.30" height="11.25" fill="#e0e0e0"/>
<rect x="72.95" y="67.00" width="11.30" height="11.25" fill="#f0f0f0"/>
<rect x="95.45" y="67.00" width="11.30" height="11.25" fill="#eeeeee"/>
<rect x="106.70" y="67.00" width="11.30" height="11.25" fill="#e4e4e4"/>
<rect x="117.95" y="67.00" width="11.30" height="11.25" fill="#f0f0f0"/>
<rect x="129.20" y="67.00" width="11.30" height="11.25" fill="#f4f4f4"/>
<rect x="140.45" y="67.00" width="11.30" height="11.25" fill="#ececec"/>
<rect x="151.70" y="67.00" width="11.30" height="11.25" fill="#f4f4f4"/>
<rect x="162.95" y="67.00" width="11.30" height="11.25" fill="#f4f4f4"/>
<rect x="174.20" y="67.00" width="11.30" height="11.25" fill="#d8d8d8"/>
<rect x="185.45" y="67.00" width="11.30" height="11.25" fill="#f4f4f4"/>
<rect x="196.70" y="67.00" width="11.30" height="11.25" fill="#f4f4f4"/>
<rect x="207.95" y="67.00" width="11.30" height="11.25" fill="#f2f2f2"/>
<rect x="219.20" y="67.00" width="11.30" height="11.25" fill="#e2e2e2"/>
<rect x="241.70" y="67.00" width="11.30" height="11.25" fill="#f0f0f0"/>
<rect x="252.95" y="67.00" width="11.30" height="11.25" fill="#d8d8d8"/>
<rect x="16.70" y="78.20" width="11.30" height="11.25" fill="#c8c8c8"/>
<rect x="27.95" y="78.20" width="11.30" height="11.25" fill="#e8e8e8"/>
<rect x="39.20" y="78.20" width="11.30" height="11.25" fill="#d8d8d8"/>
<rect x="50.45" y="78.20" width="11.30" height="11.25" fill="#d0d0d0"/>
<rect x="61.70" y="78.20" width="11.30" height="11.25" fill="#dcdcdc"/>
<rect x="72.95" y="78.20" width="11.30" height="11.25" fill="#f8f8f8"/>
<rect x="207.95" y="78.20" width="11.30" height="11.25" fill="#d8d8d8"/>
<rect x="129.20" y="89.40" width="11.30" height="11.25" fill="#c4c4c4"/>
<rect x="140.45" y="89.40" width="11.30" height="11.25" fill="#f0f0f0"/>
<rect x="151.70" y="89.40" width="11.30" height="11.25" fill="#e8e8e8"/>
<rect x="174.20" y="89.40" width="11.30" height="11.25" fill="#f6f6f6"/>
<rect x="196.70" y="89.40" width="11.30" height="11.25" fill="#f0f0f0"/>
<rect x="219.20" y="89.40" width="11.30" height="11.25" fill="#ececec"/>
<rect x="230.45" y="89.40" width="11.30" height="11.25" fill="#f4f4f4"/>
<rect x="252.95" y="89.40" width="11.30" height="11.25" fill="#f0f0f0"/>
<rect x="264.20" y="89.40" width="11.30" height="11.25" fill="#f8f8f8"/>
<rect x="84.20" y="100.60" width="11.30" height="11.25" fill="#c8c8c8"/>
<rect x="95.45" y="100.60" width="11.30" height="11.25" fill="#c8c8c8"/>
<rect x="106.70" y="100.60" width="11.30" height="11.25" fill="#e4e4e4"/>
<rect x="117.95" y="100.60" width="11.30" height="11.25" fill="#f0f0f0"/>
<rect x="151.70" y="100.60" width="11.30" height="11.25" fill="#e4e4e4"/>
<rect x="162.95" y="100.60" width="11.30" height="11.25" fill="#f0f0f0"/>
<rect x="174.20" y="100.60" width="11.30" height="11.25" fill="#f0f0f0"/>
<rect x="185.45" y="100.60" width="11.30" height="11.25" fill="#f0f0f0"/>
<rect x="207.95" y="100.60" width="11.30" height="11.25" fill="#e0e0e0"/>
<rect x="219.20" y="100.60" width="11.30" height="11.25" fill="#f4f4f4"/>
<rect x="230.45" y="100.60" width="11.30" height="11.25" fill="#f4f4f4"/>
<rect x="241.70" y="100.60" width="11.30" height="11.25" fill="#f4f4f4"/>
<rect x="39.20" y="111.80" width="11.30" height="11.25" fill="#ececec"/>
<rect x="50.45" y="111.80" width="11.30" height="11.25" fill="#d0d0d0"/>
<rect x="61.70" y="111.80" width="11.30" height="11.25" fill="#c8c8c8"/>
<rect x="72.95" y="111.80" width="11.30" height="11.25" fill="#d8d8d8"/>
<rect x="84.20" y="111.80" width="11.30" height="11.25" fill="#d8d8d8"/>
<rect x="95.45" y="111.80" width="11.30" height="11.25" fill="#dcdcdc"/>
<rect x="106.70" y="111.80" width="11.30" height="11.25" fill="#dcdcdc"/>
<rect x="117.95" y="111.80" width="11.30" height="11.25" fill="#e8e8e8"/>
<rect x="129.20" y="111.80" width="11.30" height="11.25" fill="#ececec"/>
<rect x="140.45" y="111.80" width="11.30" height="11.25" fill="#e0e0e0"/>
<rect x="151.70" y="111.80" width="11.30" height="11.25" fill="#d8d8d8"/>
<rect x="162.95" y="111.80" width="11.30" height="11.25" fill="#f0f0f0"/>
<rect x="174.20" y="111.80" width="11.30" height="11.25" fill="#fafafa"/>
<rect x="207.95" y="111.80" width="11.30" height="11.25" fill="#fafafa"/>
<rect x="219.20" y="111.80" width="11.30" height="11.25" fill="#e0e0e0"/>
<rect x="230.45" y="111.80" width="11.30" height="11.25" fill="#c4c4c4"/>
<rect x="241.70" y="111.80" width="11.30" height="11.25" fill="#d8d8d8"/>
<rect x="252.95" y="111.80" width="11.30" height="11.25" fill="#c4c4c4"/>
<rect x="264.20" y="111.80" width="11.30" height="11.25" fill="#dcdcdc"/>
<rect x="50.45" y="121.80" width="11.25" height="1.60" fill="#b8b8b8"/>
<line x1="225.50" y1="0.00" x2="225.50" y2="11.00" stroke="#222" stroke-width="0.9"/>
<path d="M183 10 Q197 6 213 10" fill="none" stroke="#333" stroke-width="0.7"/>
<rect x="19.30" y="131.80" width="84.30" height="6.20" fill="#0a0a0a"/>
<text x="20.80" y="136.70" font-family="Liberation Sans" font-weight="bold" font-size="4.3" fill="#dcdcdc">MRI</text>
<rect x="19.80" y="137.50" width="85.70" height="154.20" fill="none" stroke="#6a6a6a" stroke-width="0.7"/>
<rect x="22.00" y="141.70" width="25.30" height="1.90" fill="#505050"/>
<rect x="22.00" y="145.90" width="24.60" height="1.90" fill="#505050"/>
<rect x="21.50" y="153.00" width="29.30" height="1.90" fill="#505050"/>
<rect x="22.00" y="156.71" width="2.2" height="2.2" fill="none" stroke="#909090" stroke-width="0.45"/>
<rect x="25.20" y="157.11" width="13.01" height="1.70" fill="#858585"/>
<rect x="22.00" y="160.95" width="2.2" height="2.2" fill="none" stroke="#909090" stroke-width="0.45"/>
<rect x="25.20" y="161.35" width="19.50" height="1.70" fill="#858585"/>
<rect x="22.00" y="165.19" width="2.2" height="2.2" fill="none" stroke="#909090" stroke-width="0.45"/>
<rect x="25.20" y="165.59" width="17.12" height="1.70" fill="#858585"/>
<rect x="22.00" y="169.43" width="2.2" height="2.2" fill="none" stroke="#909090" stroke-width="0.45"/>
<rect x="25.20" y="169.83" width="12.81" height="1.70" fill="#858585"/>
<rect x="22.00" y="173.67" width="2.2" height="2.2" fill="none" stroke="#909090" stroke-width="0.45"/>
<rect x="25.20" y="174.07" width="19.10" height="1.70" fill="#858585"/>
<rect x="22.00" y="177.90" width="2.2" height="2.2" fill="none" stroke="#909090" stroke-width="0.45"/>
<rect x="25.20" y="178.30" width="12.52" height="1.70" fill="#858585"/>
<rect x="22.00" y="182.14" width="2.2" height="2.2" fill="none" stroke="#909090" stroke-width="0.45"/>
<rect x="25.20" y="182.54" width="18.07" height="1.70" fill="#858585"/>
<rect x="22.00" y="186.38" width="2.2" height="2.2" fill="none" stroke="#909090" stroke-width="0.45"/>
<rect x="25.20" y="186.78" width="12.98" height="1.70" fill="#858585"/>
<rect x="22.00" y="190.62" width="2.2" height="2.2" fill="none" stroke="#909090" stroke-width="0.45"/>
<rect x="25.20" y="191.02" width="13.27" height="1.70" fill="#858585"/>
<rect x="22.00" y="194.86" width="2.2" height="2.2" fill="none" stroke="#909090" stroke-width="0.45"/>
<rect x="25.20" y="195.26" width="17.94" height="1.70" fill="#858585"/>
<rect x="22.00" y="199.09" width="2.2" height="2.2" fill="none" stroke="#909090" stroke-width="0.45"/>
<rect x="25.20" y="199.49" width="23.58" height="1.70" fill="#858585"/>
<rect x="22.00" y="206.46" width="8.12" height="1.70" fill="#858585"/>
<rect x="22.50" y="213.12" width="18.45" height="1.90" fill="#505050"/>
<rect x="23.00" y="216.95" width="2.2" height="2.2" fill="none" stroke="#909090" stroke-width="0.45"/>
<rect x="26.20" y="217.35" width="13.02" height="1.70" fill="#858585"/>
<rect x="23.00" y="221.19" width="2.2" height="2.2" fill="none" stroke="#909090" stroke-width="0.45"/>
<rect x="26.20" y="221.59" width="15.58" height="1.70" fill="#858585"/>
<rect x="23.00" y="225.43" width="2.2" height="2.2" fill="none" stroke="#909090" stroke-width="0.45"/>
<rect x="26.20" y="225.83" width="12.62" height="1.70" fill="#858585"/>
<rect x="23.00" y="229.67" width="2.2" height="2.2" fill="none" stroke="#909090" stroke-width="0.45"/>
<rect x="26.20" y="230.07" width="11.17" height="1.70" fill="#858585"/>
<rect x="23.00" y="233.91" width="2.2" height="2.2" fill="none" stroke="#909090" stroke-width="0.45"/>
<rect x="26.20" y="234.31" width="15.81" height="1.70" fill="#858585"/>
<rect x="23.00" y="238.14" width="2.2" height="2.2" fill="none" stroke="#909090" stroke-width="0.45"/>
<rect x="26.20" y="238.54" width="8.37" height="1.70" fill="#858585"/>
<rect x="23.00" y="242.38" width="2.2" height="2.2" fill="none" stroke="#909090" stroke-width="0.45"/>
<rect x="26.20" y="242.78" width="14.87" height="1.70" fill="#858585"/>
<rect x="23.00" y="246.62" width="2.2" height="2.2" fill="none" stroke="#909090" stroke-width="0.45"/>
<rect x="26.20" y="247.02" width="10.32" height="1.70" fill="#858585"/>
<rect x="23.00" y="250.86" width="2.2" height="2.2" fill="none" stroke="#909090" stroke-width="0.45"/>
<rect x="26.20" y="251.26" width="9.15" height="1.70" fill="#858585"/>
<rect x="23.00" y="255.09" width="2.2" height="2.2" fill="none" stroke="#909090" stroke-width="0.45"/>
<rect x="26.20" y="255.49" width="8.94" height="1.70" fill="#858585"/>
<rect x="23.00" y="259.33" width="2.2" height="2.2" fill="none" stroke="#909090" stroke-width="0.45"/>
<rect x="26.20" y="259.73" width="10.47" height="1.70" fill="#858585"/>
<rect x="50.50" y="217.35" width="1.80" height="1.50" fill="#8a8a8a"/>
<rect x="57.50" y="217.35" width="1.60" height="1.50" fill="#a0a0a0"/>
<rect x="50.50" y="221.59" width="1.80" height="1.50" fill="#8a8a8a"/>
<rect x="57.50" y="221.59" width="1.60" height="1.50" fill="#a0a0a0"/>
<rect x="50.50" y="225.83" width="1.80" height="1.50" fill="#8a8a8a"/>
<rect x="57.50" y="225.83" width="1.60" height="1.50" fill="#a0a0a0"/>
<rect x="50.50" y="230.07" width="1.80" height="1.50" fill="#8a8a8a"/>
<rect x="57.50" y="230.07" width="1.60" height="1.50" fill="#a0a0a0"/>
<rect x="50.50" y="234.31" width="1.80" height="1.50" fill="#8a8a8a"/>
<rect x="57.50" y="234.31" width="1.60" height="1.50" fill="#a0a0a0"/>
<rect x="50.50" y="238.54" width="1.80" height="1.50" fill="#8a8a8a"/>
<rect x="57.50" y="238.54" width="1.60" height="1.50" fill="#a0a0a0"/>
<rect x="50.50" y="242.78" width="1.80" height="1.50" fill="#8a8a8a"/>
<rect x="57.50" y="242.78" width="1.60" height="1.50" fill="#a0a0a0"/>
<rect x="50.50" y="247.02" width="1.80" height="1.50" fill="#8a8a8a"/>
<rect x="57.50" y="247.02" width="1.60" height="1.50" fill="#a0a0a0"/>
<rect x="50.50" y="251.26" width="1.80" height="1.50" fill="#8a8a8a"/>
<rect x="57.50" y="251.26" width="1.60" height="1.50" fill="#a0a0a0"/>
<rect x="50.50" y="255.49" width="1.80" height="1.50" fill="#8a8a8a"/>
<rect x="57.50" y="255.49" width="1.60" height="1.50" fill="#a0a0a0"/>
<rect x="50.50" y="259.73" width="1.80" height="1.50" fill="#8a8a8a"/>
<rect x="57.50" y="259.73" width="1.60" height="1.50" fill="#a0a0a0"/>
<rect x="63.50" y="140.80" width="2.2" height="2.2" fill="none" stroke="#909090" stroke-width="0.45"/>
<rect x="66.70" y="141.20" width="33.63" height="1.70" fill="#858585"/>
<rect x="63.50" y="152.27" width="8.18" height="1.90" fill="#505050"/>
<rect x="64.00" y="156.11" width="2.2" height="2.2" fill="none" stroke="#909090" stroke-width="0.45"/>
<rect x="67.20" y="156.51" width="26.14" height="1.70" fill="#858585"/>
<rect x="64.00" y="160.35" width="2.2" height="2.2" fill="none" stroke="#909090" stroke-width="0.45"/>
<rect x="67.20" y="160.75" width="26.94" height="1.70" fill="#858585"/>
<rect x="64.00" y="164.58" width="2.2" height="2.2" fill="none" stroke="#909090" stroke-width="0.45"/>
<rect x="67.20" y="164.98" width="23.21" height="1.70" fill="#858585"/>
<rect x="64.00" y="168.82" width="2.2" height="2.2" fill="none" stroke="#909090" stroke-width="0.45"/>
<rect x="67.20" y="169.22" width="25.67" height="1.70" fill="#858585"/>
<rect x="64.00" y="173.06" width="2.2" height="2.2" fill="none" stroke="#909090" stroke-width="0.45"/>
<rect x="67.20" y="173.46" width="18.88" height="1.70" fill="#858585"/>
<rect x="64.00" y="177.30" width="2.2" height="2.2" fill="none" stroke="#909090" stroke-width="0.45"/>
<rect x="67.20" y="177.70" width="18.83" height="1.70" fill="#858585"/>
<rect x="64.00" y="181.54" width="2.2" height="2.2" fill="none" stroke="#909090" stroke-width="0.45"/>
<rect x="67.20" y="181.94" width="20.88" height="1.70" fill="#858585"/>
<rect x="64.00" y="185.77" width="2.2" height="2.2" fill="none" stroke="#909090" stroke-width="0.45"/>
<rect x="67.20" y="186.17" width="27.53" height="1.70" fill="#858585"/>
<rect x="64.00" y="190.01" width="2.2" height="2.2" fill="none" stroke="#909090" stroke-width="0.45"/>
<rect x="67.20" y="190.41" width="23.99" height="1.70" fill="#858585"/>
<rect x="64.50" y="212.06" width="22.63" height="1.90" fill="#505050"/>
<rect x="65.00" y="216.20" width="2.2" height="2.2" fill="none" stroke="#909090" stroke-width="0.45"/>
<rect x="68.20" y="216.60" width="23.37" height="1.70" fill="#858585"/>
<rect x="65.00" y="220.43" width="2.2" height="2.2" fill="none" stroke="#909090" stroke-width="0.45"/>
<rect x="68.20" y="220.83" width="21.25" height="1.70" fill="#858585"/>
<rect x="65.00" y="224.67" width="2.2" height="2.2" fill="none" stroke="#909090" stroke-width="0.45"/>
<rect x="68.20" y="225.07" width="18.80" height="1.70" fill="#858585"/>
<rect x="65.00" y="228.91" width="2.2" height="2.2" fill="none" stroke="#909090" stroke-width="0.45"/>
<rect x="68.20" y="229.31" width="26.71" height="1.70" fill="#858585"/>
<rect x="65.00" y="233.15" width="2.2" height="2.2" fill="none" stroke="#909090" stroke-width="0.45"/>
<rect x="68.20" y="233.55" width="25.18" height="1.70" fill="#858585"/>
<rect x="65.00" y="237.39" width="2.2" height="2.2" fill="none" stroke="#909090" stroke-width="0.45"/>
<rect x="68.20" y="237.79" width="17.91" height="1.70" fill="#858585"/>
<rect x="65.00" y="241.62" width="2.2" height="2.2" fill="none" stroke="#909090" stroke-width="0.45"/>
<rect x="68.20" y="242.02" width="23.19" height="1.70" fill="#858585"/>
<rect x="65.00" y="245.86" width="2.2" height="2.2" fill="none" stroke="#909090" stroke-width="0.45"/>
<rect x="68.20" y="246.26" width="22.40" height="1.70" fill="#858585"/>
<rect x="65.00" y="250.10" width="2.2" height="2.2" fill="none" stroke="#909090" stroke-width="0.45"/>
<rect x="68.20" y="250.50" width="28.00" height="1.70" fill="#858585"/>
<rect x="65.00" y="254.34" width="2.2" height="2.2" fill="none" stroke="#909090" stroke-width="0.45"/>
<rect x="68.20" y="254.74" width="25.67" height="1.70" fill="#858585"/>
<rect x="65.00" y="258.58" width="2.2" height="2.2" fill="none" stroke="#909090" stroke-width="0.45"/>
<rect x="68.20" y="258.98" width="18.61" height="1.70" fill="#858585"/>
<rect x="109.00" y="129.60" width="83.60" height="6.80" fill="#0a0a0a"/>
<text x="110.50" y="135.10" font-family="Liberation Sans" font-weight="bold" font-size="4.3" fill="#dcdcdc">CT</text>
<rect x="109.50" y="136.00" width="87.80" height="175.00" fill="none" stroke="#6a6a6a" stroke-width="0.7"/>
<rect x="111.00" y="140.90" width="27.92" height="1.90" fill="#505050"/>
<rect x="111.00" y="145.50" width="24.47" height="1.90" fill="#505050"/>
<rect x="111.00" y="150.20" width="25.67" height="1.90" fill="#505050"/>
<rect x="110.50" y="158.02" width="9.76" height="1.90" fill="#505050"/>
<rect x="111.50" y="162.16" width="2.2" height="2.2" fill="none" stroke="#909090" stroke-width="0.45"/>
<rect x="114.70" y="162.56" width="18.13" height="1.70" fill="#858585"/>
<rect x="111.50" y="166.98" width="2.2" height="2.2" fill="none" stroke="#909090" stroke-width="0.45"/>
<rect x="114.70" y="167.38" width="22.85" height="1.70" fill="#858585"/>
<rect x="111.50" y="171.79" width="2.2" height="2.2" fill="none" stroke="#909090" stroke-width="0.45"/>
<rect x="114.70" y="172.19" width="16.55" height="1.70" fill="#858585"/>
<rect x="111.50" y="176.60" width="2.2" height="2.2" fill="none" stroke="#909090" stroke-width="0.45"/>
<rect x="114.70" y="177.00" width="25.36" height="1.70" fill="#858585"/>
<rect x="111.50" y="181.42" width="2.2" height="2.2" fill="none" stroke="#909090" stroke-width="0.45"/>
<rect x="114.70" y="181.82" width="26.70" height="1.70" fill="#858585"/>
<rect x="111.50" y="186.23" width="2.2" height="2.2" fill="none" stroke="#909090" stroke-width="0.45"/>
<rect x="114.70" y="186.63" width="24.02" height="1.70" fill="#858585"/>
<rect x="111.50" y="191.04" width="2.2" height="2.2" fill="none" stroke="#909090" stroke-width="0.45"/>
<rect x="114.70" y="191.44" width="28.26" height="1.70" fill="#858585"/>
<rect x="111.50" y="195.85" width="2.2" height="2.2" fill="none" stroke="#909090" stroke-width="0.45"/>
<rect x="114.70" y="196.25" width="20.39" height="1.70" fill="#858585"/>
<rect x="111.50" y="200.67" width="2.2" height="2.2" fill="none" stroke="#909090" stroke-width="0.45"/>
<rect x="114.70" y="201.07" width="25.73" height="1.70" fill="#858585"/>
<rect x="111.50" y="205.48" width="2.2" height="2.2" fill="none" stroke="#909090" stroke-width="0.45"/>
<rect x="114.70" y="205.88" width="24.32" height="1.70" fill="#858585"/>
<rect x="111.50" y="210.29" width="2.2" height="2.2" fill="none" stroke="#909090" stroke-width="0.45"/>
<rect x="114.70" y="210.69" width="24.12" height="1.70" fill="#858585"/>
<rect x="111.50" y="215.11" width="2.2" height="2.2" fill="none" stroke="#909090" stroke-width="0.45"/>
<rect x="114.70" y="215.51" width="22.39" height="1.70" fill="#858585"/>
<rect x="111.50" y="219.92" width="2.2" height="2.2" fill="none" stroke="#909090" stroke-width="0.45"/>
<rect x="114.70" y="220.32" width="27.76" height="1.70" fill="#858585"/>
<rect x="111.50" y="224.73" width="2.2" height="2.2" fill="none" stroke="#909090" stroke-width="0.45"/>
<rect x="114.70" y="225.13" width="29.23" height="1.70" fill="#858585"/>
<rect x="111.00" y="232.79" width="8.47" height="1.90" fill="#505050"/>
<rect x="112.00" y="236.93" width="2.2" height="2.2" fill="none" stroke="#909090" stroke-width="0.45"/>
<rect x="115.20" y="237.33" width="26.63" height="1.70" fill="#858585"/>
<rect x="112.00" y="241.75" width="2.2" height="2.2" fill="none" stroke="#909090" stroke-width="0.45"/>
<rect x="115.20" y="242.15" width="16.97" height="1.70" fill="#858585"/>
<rect x="112.00" y="246.56" width="2.2" height="2.2" fill="none" stroke="#909090" stroke-width="0.45"/>
<rect x="115.20" y="246.96" width="27.22" height="1.70" fill="#858585"/>
<rect x="112.00" y="251.37" width="2.2" height="2.2" fill="none" stroke="#909090" stroke-width="0.45"/>
<rect x="115.20" y="251.77" width="26.35" height="1.70" fill="#858585"/>
<rect x="112.00" y="256.18" width="2.2" height="2.2" fill="none" stroke="#909090" stroke-width="0.45"/>
<rect x="115.20" y="256.58" width="31.89" height="1.70" fill="#858585"/>
<rect x="155.50" y="139.41" width="33.29" height="1.90" fill="#505050"/>
<rect x="155.50" y="144.40" width="31.14" height="1.90" fill="#505050"/>
<rect x="155.50" y="149.24" width="31.54" height="1.90" fill="#505050"/>
<rect x="155.00" y="156.81" width="19.34" height="1.90" fill="#505050"/>
<rect x="156.00" y="161.71" width="2.2" height="2.2" fill="none" stroke="#909090" stroke-width="0.45"/>
<rect x="159.20" y="162.11" width="16.32" height="1.70" fill="#858585"/>
<rect x="156.00" y="166.25" width="2.2" height="2.2" fill="none" stroke="#909090" stroke-width="0.45"/>
<rect x="159.20" y="166.65" width="22.46" height="1.70" fill="#858585"/>
<rect x="156.00" y="170.79" width="2.2" height="2.2" fill="none" stroke="#909090" stroke-width="0.45"/>
<rect x="159.20" y="171.19" width="18.35" height="1.70" fill="#858585"/>
<rect x="156.00" y="175.63" width="2.2" height="2.2" fill="none" stroke="#909090" stroke-width="0.45"/>
<rect x="159.20" y="176.03" width="17.64" height="1.70" fill="#858585"/>
<rect x="156.00" y="180.63" width="2.2" height="2.2" fill="none" stroke="#909090" stroke-width="0.45"/>
<rect x="159.20" y="181.03" width="16.83" height="1.70" fill="#858585"/>
<rect x="156.00" y="185.17" width="2.2" height="2.2" fill="none" stroke="#909090" stroke-width="0.45"/>
<rect x="159.20" y="185.57" width="26.76" height="1.70" fill="#858585"/>
<rect x="155.00" y="193.89" width="8.13" height="1.90" fill="#505050"/>
<rect x="156.00" y="198.03" width="2.2" height="2.2" fill="none" stroke="#909090" stroke-width="0.45"/>
<rect x="159.20" y="198.43" width="17.47" height="1.70" fill="#858585"/>
<rect x="156.00" y="202.57" width="2.2" height="2.2" fill="none" stroke="#909090" stroke-width="0.45"/>
<rect x="159.20" y="202.97" width="19.47" height="1.70" fill="#858585"/>
<rect x="156.00" y="207.57" width="2.2" height="2.2" fill="none" stroke="#909090" stroke-width="0.45"/>
<rect x="159.20" y="207.97" width="26.20" height="1.70" fill="#858585"/>
<rect x="156.00" y="216.95" width="2.2" height="2.2" fill="none" stroke="#909090" stroke-width="0.45"/>
<rect x="159.20" y="217.35" width="15.13" height="1.70" fill="#858585"/>
<rect x="156.00" y="221.49" width="2.2" height="2.2" fill="none" stroke="#909090" stroke-width="0.45"/>
<rect x="159.20" y="221.89" width="20.29" height="1.70" fill="#858585"/>
<rect x="155.00" y="231.28" width="29.10" height="1.90" fill="#505050"/>
<rect x="156.00" y="236.18" width="2.2" height="2.2" fill="none" stroke="#909090" stroke-width="0.45"/>
<rect x="159.20" y="236.58" width="15.30" height="1.70" fill="#858585"/>
<rect x="156.00" y="241.17" width="2.2" height="2.2" fill="none" stroke="#909090" stroke-width="0.45"/>
<rect x="159.20" y="241.57" width="14.92" height="1.70" fill="#858585"/>
<rect x="156.00" y="246.01" width="2.2" height="2.2" fill="none" stroke="#909090" stroke-width="0.45"/>
<rect x="159.20" y="246.41" width="15.18" height="1.70" fill="#858585"/>
<rect x="156.00" y="251.01" width="2.2" height="2.2" fill="none" stroke="#909090" stroke-width="0.45"/>
<rect x="159.20" y="251.41" width="11.67" height="1.70" fill="#858585"/>
<rect x="156.00" y="263.94" width="24.42" height="1.90" fill="#505050"/>
<rect x="156.00" y="269.24" width="2.2" height="2.2" fill="none" stroke="#909090" stroke-width="0.45"/>
<rect x="159.20" y="269.64" width="28.72" height="1.70" fill="#858585"/>
<rect x="156.00" y="275.50" width="35.77" height="1.70" fill="#858585"/>
<rect x="156.00" y="280.12" width="35.92" height="1.70" fill="#858585"/>
<rect x="111.00" y="258.77" width="2.2" height="2.2" fill="none" stroke="#909090" stroke-width="0.45"/>
<rect x="114.20" y="259.17" width="14.11" height="1.70" fill="#858585"/>
<rect x="111.00" y="263.10" width="2.2" height="2.2" fill="none" stroke="#909090" stroke-width="0.45"/>
<rect x="114.20" y="263.50" width="14.47" height="1.70" fill="#858585"/>
<rect x="111.00" y="267.44" width="2.2" height="2.2" fill="none" stroke="#909090" stroke-width="0.45"/>
<rect x="114.20" y="267.84" width="15.25" height="1.70" fill="#858585"/>
<rect x="111.00" y="271.48" width="2.2" height="2.2" fill="none" stroke="#909090" stroke-width="0.45"/>
<rect x="114.20" y="271.88" width="15.27" height="1.70" fill="#858585"/>
<rect x="111.00" y="275.39" width="2.2" height="2.2" fill="none" stroke="#909090" stroke-width="0.45"/>
<rect x="114.20" y="275.79" width="18.79" height="1.70" fill="#858585"/>
<rect x="111.00" y="279.72" width="2.2" height="2.2" fill="none" stroke="#909090" stroke-width="0.45"/>
<rect x="114.20" y="280.12" width="20.25" height="1.70" fill="#858585"/>
<rect x="111.00" y="284.06" width="2.2" height="2.2" fill="none" stroke="#909090" stroke-width="0.45"/>
<rect x="114.20" y="284.46" width="15.68" height="1.70" fill="#858585"/>
<rect x="111.00" y="288.39" width="2.2" height="2.2" fill="none" stroke="#909090" stroke-width="0.45"/>
<rect x="114.20" y="288.79" width="12.06" height="1.70" fill="#858585"/>
<rect x="198.20" y="127.30" width="83.70" height="6.50" fill="#0a0a0a"/>
<text x="199.70" y="132.50" font-family="Liberation Sans" font-weight="bold" font-size="4.3" fill="#dcdcdc">PET/CT</text>
<rect x="198.50" y="133.50" width="83.80" height="50.50" fill="none" stroke="#6a6a6a" stroke-width="0.7"/>
<rect x="200.00" y="137.19" width="2.2" height="2.2" fill="none" stroke="#909090" stroke-width="0.45"/>
<rect x="203.20" y="137.59" width="64.19" height="1.70" fill="#858585"/>
<rect x="200.00" y="141.28" width="2.2" height="2.2" fill="none" stroke="#909090" stroke-width="0.45"/>
<rect x="203.20" y="141.68" width="63.69" height="1.70" fill="#858585"/>
<rect x="200.00" y="145.51" width="2.2" height="2.2" fill="none" stroke="#909090" stroke-width="0.45"/>
<rect x="203.20" y="145.91" width="65.66" height="1.70" fill="#858585"/>
<rect x="199.50" y="151.06" width="8.95" height="1.90" fill="#505050"/>
<rect x="201.50" y="154.90" width="2.2" height="2.2" fill="none" stroke="#909090" stroke-width="0.45"/>
<rect x="204.70" y="155.30" width="8.69" height="1.70" fill="#858585"/>
<rect x="232.00" y="154.90" width="2.2" height="2.2" fill="none" stroke="#909090" stroke-width="0.45"/>
<rect x="235.20" y="155.30" width="12.52" height="1.70" fill="#858585"/>
<rect x="199.50" y="159.54" width="10.62" height="1.90" fill="#505050"/>
<rect x="201.50" y="163.68" width="2.2" height="2.2" fill="none" stroke="#909090" stroke-width="0.45"/>
<rect x="204.70" y="164.08" width="22.68" height="1.70" fill="#858585"/>
<rect x="199.50" y="168.16" width="9.05" height="1.90" fill="#505050"/>
<rect x="201.50" y="171.85" width="2.2" height="2.2" fill="none" stroke="#909090" stroke-width="0.45"/>
<rect x="204.70" y="172.25" width="12.90" height="1.70" fill="#858585"/>
<rect x="232.00" y="171.85" width="2.2" height="2.2" fill="none" stroke="#909090" stroke-width="0.45"/>
<rect x="235.20" y="172.25" width="12.78" height="1.70" fill="#858585"/>
<rect x="261.00" y="171.09" width="2.2" height="2.2" fill="none" stroke="#909090" stroke-width="0.45"/>
<rect x="264.20" y="171.49" width="15.87" height="1.70" fill="#858585"/>
<rect x="200.00" y="183.30" width="6.80" height="1.70" fill="#858585"/>
<rect x="199.40" y="187.00" width="83.60" height="7.30" fill="#0a0a0a"/>
<text x="200.90" y="193.00" font-family="Liberation Sans" font-weight="bold" font-size="4.3" fill="#dcdcdc">ULTRASOUND</text>
<rect x="200.00" y="194.00" width="85.40" height="93.00" fill="none" stroke="#6a6a6a" stroke-width="0.7"/>
<rect x="202.00" y="198.03" width="2.2" height="2.2" fill="none" stroke="#909090" stroke-width="0.45"/>
<rect x="205.20" y="198.43" width="16.63" height="1.70" fill="#858585"/>
<rect x="202.00" y="201.82" width="2.2" height="2.2" fill="none" stroke="#909090" stroke-width="0.45"/>
<rect x="205.20" y="202.22" width="16.78" height="1.70" fill="#858585"/>
<rect x="202.00" y="206.06" width="2.2" height="2.2" fill="none" stroke="#909090" stroke-width="0.45"/>
<rect x="205.20" y="206.46" width="10.28" height="1.70" fill="#858585"/>
<rect x="202.00" y="210.60" width="2.2" height="2.2" fill="none" stroke="#909090" stroke-width="0.45"/>
<rect x="205.20" y="211.00" width="21.95" height="1.70" fill="#858585"/>
<rect x="202.00" y="215.14" width="2.2" height="2.2" fill="none" stroke="#909090" stroke-width="0.45"/>
<rect x="205.20" y="215.54" width="9.37" height="1.70" fill="#858585"/>
<rect x="202.00" y="219.22" width="2.2" height="2.2" fill="none" stroke="#909090" stroke-width="0.45"/>
<rect x="205.20" y="219.62" width="9.48" height="1.70" fill="#858585"/>
<rect x="202.00" y="223.31" width="2.2" height="2.2" fill="none" stroke="#909090" stroke-width="0.45"/>
<rect x="205.20" y="223.71" width="12.59" height="1.70" fill="#858585"/>
<rect x="202.00" y="227.85" width="2.2" height="2.2" fill="none" stroke="#909090" stroke-width="0.45"/>
<rect x="205.20" y="228.25" width="11.57" height="1.70" fill="#858585"/>
<rect x="202.00" y="232.09" width="2.2" height="2.2" fill="none" stroke="#909090" stroke-width="0.45"/>
<rect x="205.20" y="232.49" width="15.48" height="1.70" fill="#858585"/>
<rect x="202.00" y="236.63" width="2.2" height="2.2" fill="none" stroke="#909090" stroke-width="0.45"/>
<rect x="205.20" y="237.03" width="9.16" height="1.70" fill="#858585"/>
<rect x="202.00" y="240.87" width="2.2" height="2.2" fill="none" stroke="#909090" stroke-width="0.45"/>
<rect x="205.20" y="241.27" width="8.01" height="1.70" fill="#858585"/>
<rect x="202.00" y="244.95" width="2.2" height="2.2" fill="none" stroke="#909090" stroke-width="0.45"/>
<rect x="205.20" y="245.35" width="11.33" height="1.70" fill="#858585"/>
<rect x="202.00" y="249.49" width="2.2" height="2.2" fill="none" stroke="#909090" stroke-width="0.45"/>
<rect x="205.20" y="249.89" width="10.23" height="1.70" fill="#858585"/>
<rect x="202.00" y="253.73" width="2.2" height="2.2" fill="none" stroke="#909090" stroke-width="0.45"/>
<rect x="205.20" y="254.13" width="16.00" height="1.70" fill="#858585"/>
<rect x="202.00" y="258.12" width="2.2" height="2.2" fill="none" stroke="#909090" stroke-width="0.45"/>
<rect x="205.20" y="258.52" width="8.56" height="1.70" fill="#858585"/>
<rect x="242.50" y="197.22" width="14.87" height="1.90" fill="#505050"/>
<rect x="243.00" y="201.06" width="2.2" height="2.2" fill="none" stroke="#909090" stroke-width="0.45"/>
<rect x="246.20" y="201.46" width="26.60" height="1.70" fill="#858585"/>
<rect x="243.00" y="205.30" width="2.2" height="2.2" fill="none" stroke="#909090" stroke-width="0.45"/>
<rect x="246.20" y="205.70" width="20.08" height="1.70" fill="#858585"/>
<rect x="243.00" y="209.39" width="2.2" height="2.2" fill="none" stroke="#909090" stroke-width="0.45"/>
<rect x="246.20" y="209.79" width="21.53" height="1.70" fill="#858585"/>
<rect x="243.00" y="213.62" width="2.2" height="2.2" fill="none" stroke="#909090" stroke-width="0.45"/>
<rect x="246.20" y="214.02" width="22.86" height="1.70" fill="#858585"/>
<rect x="243.00" y="218.16" width="2.2" height="2.2" fill="none" stroke="#909090" stroke-width="0.45"/>
<rect x="246.20" y="218.56" width="23.10" height="1.70" fill="#858585"/>
<rect x="243.00" y="222.25" width="2.2" height="2.2" fill="none" stroke="#909090" stroke-width="0.45"/>
<rect x="246.20" y="222.65" width="19.72" height="1.70" fill="#858585"/>
<rect x="243.00" y="226.79" width="2.2" height="2.2" fill="none" stroke="#909090" stroke-width="0.45"/>
<rect x="246.20" y="227.19" width="29.89" height="1.70" fill="#858585"/>
<rect x="243.00" y="230.88" width="2.2" height="2.2" fill="none" stroke="#909090" stroke-width="0.45"/>
<rect x="246.20" y="231.28" width="31.90" height="1.70" fill="#858585"/>
<rect x="243.00" y="235.42" width="2.2" height="2.2" fill="none" stroke="#909090" stroke-width="0.45"/>
<rect x="246.20" y="235.82" width="24.52" height="1.70" fill="#858585"/>
<rect x="243.00" y="239.66" width="2.2" height="2.2" fill="none" stroke="#909090" stroke-width="0.45"/>
<rect x="246.20" y="240.06" width="24.77" height="1.70" fill="#858585"/>
<rect x="243.00" y="243.89" width="2.2" height="2.2" fill="none" stroke="#909090" stroke-width="0.45"/>
<rect x="246.20" y="244.29" width="19.20" height="1.70" fill="#858585"/>
<rect x="243.00" y="248.44" width="2.2" height="2.2" fill="none" stroke="#909090" stroke-width="0.45"/>
<rect x="246.20" y="248.84" width="19.43" height="1.70" fill="#858585"/>
<rect x="243.00" y="252.98" width="2.2" height="2.2" fill="none" stroke="#909090" stroke-width="0.45"/>
<rect x="246.20" y="253.38" width="22.80" height="1.70" fill="#858585"/>
<rect x="243.00" y="257.37" width="2.2" height="2.2" fill="none" stroke="#909090" stroke-width="0.45"/>
<rect x="246.20" y="257.77" width="21.71" height="1.70" fill="#858585"/>
<rect x="202.00" y="258.14" width="2.2" height="2.2" fill="none" stroke="#909090" stroke-width="0.45"/>
<rect x="205.20" y="258.54" width="22.29" height="1.70" fill="#858585"/>
<rect x="202.00" y="262.77" width="2.2" height="2.2" fill="none" stroke="#909090" stroke-width="0.45"/>
<rect x="205.20" y="263.17" width="15.61" height="1.70" fill="#858585"/>
<rect x="202.00" y="267.08" width="2.2" height="2.2" fill="none" stroke="#909090" stroke-width="0.45"/>
<rect x="205.20" y="267.48" width="14.23" height="1.70" fill="#858585"/>
<rect x="202.00" y="271.24" width="2.2" height="2.2" fill="none" stroke="#909090" stroke-width="0.45"/>
<rect x="205.20" y="271.64" width="23.51" height="1.70" fill="#858585"/>
<rect x="202.00" y="275.41" width="2.2" height="2.2" fill="none" stroke="#909090" stroke-width="0.45"/>
<rect x="205.20" y="275.81" width="19.28" height="1.70" fill="#858585"/>
<rect x="202.00" y="285.52" width="6.15" height="1.70" fill="#858585"/>
<rect x="201.90" y="289.40" width="84.30" height="8.00" fill="#0a0a0a"/>
<text x="203.40" y="296.10" font-family="Liberation Sans" font-weight="bold" font-size="4.3" fill="#dcdcdc">MAMMOGRAPHY W/CAD</text>
<rect x="202.50" y="297.00" width="85.20" height="64.80" fill="none" stroke="#6a6a6a" stroke-width="0.7"/>
<rect x="204.00" y="299.39" width="73.26" height="1.70" fill="#858585"/>
<rect x="204.00" y="303.71" width="70.16" height="1.70" fill="#858585"/>
<rect x="205.00" y="309.78" width="2.2" height="2.2" fill="none" stroke="#909090" stroke-width="0.45"/>
<rect x="208.20" y="310.18" width="26.22" height="1.70" fill="#858585"/>
<rect x="205.00" y="315.27" width="29.83" height="1.90" fill="#505050"/>
<rect x="205.00" y="319.89" width="28.91" height="1.90" fill="#505050"/>
<rect x="235.00" y="314.40" width="2.2" height="2.2" fill="none" stroke="#909090" stroke-width="0.45"/>
<rect x="238.20" y="314.80" width="20.18" height="1.70" fill="#858585"/>
<rect x="235.00" y="319.03" width="2.2" height="2.2" fill="none" stroke="#909090" stroke-width="0.45"/>
<rect x="238.20" y="319.43" width="17.57" height="1.70" fill="#858585"/>
<rect x="209.00" y="323.19" width="2.2" height="2.2" fill="none" stroke="#909090" stroke-width="0.45"/>
<rect x="212.20" y="323.59" width="41.00" height="1.70" fill="#858585"/>
<rect x="209.00" y="327.81" width="2.2" height="2.2" fill="none" stroke="#909090" stroke-width="0.45"/>
<rect x="212.20" y="328.21" width="35.01" height="1.70" fill="#858585"/>
<rect x="209.00" y="332.13" width="2.2" height="2.2" fill="none" stroke="#909090" stroke-width="0.45"/>
<rect x="212.20" y="332.53" width="53.16" height="1.70" fill="#858585"/>
<rect x="209.00" y="336.29" width="2.2" height="2.2" fill="none" stroke="#909090" stroke-width="0.45"/>
<rect x="212.20" y="336.69" width="45.98" height="1.70" fill="#858585"/>
<rect x="209.00" y="340.61" width="2.2" height="2.2" fill="none" stroke="#909090" stroke-width="0.45"/>
<rect x="212.20" y="341.01" width="53.37" height="1.70" fill="#858585"/>
<rect x="209.00" y="345.23" width="2.2" height="2.2" fill="none" stroke="#909090" stroke-width="0.45"/>
<rect x="212.20" y="345.63" width="39.89" height="1.70" fill="#858585"/>
<rect x="209.00" y="349.55" width="2.2" height="2.2" fill="none" stroke="#909090" stroke-width="0.45"/>
<rect x="212.20" y="349.95" width="36.69" height="1.70" fill="#858585"/>
<rect x="209.00" y="353.71" width="2.2" height="2.2" fill="none" stroke="#909090" stroke-width="0.45"/>
<rect x="212.20" y="354.11" width="54.35" height="1.70" fill="#858585"/>
<rect x="209.00" y="358.03" width="2.2" height="2.2" fill="none" stroke="#909090" stroke-width="0.45"/>
<rect x="212.20" y="358.43" width="59.55" height="1.70" fill="#858585"/>
<rect x="23.00" y="293.00" width="85.00" height="8.00" fill="#0a0a0a"/>
<text x="24.50" y="299.70" font-family="Liberation Sans" font-weight="bold" font-size="4.3" fill="#dcdcdc">X-RAY</text>
<rect x="24.00" y="300.50" width="85.00" height="64.90" fill="none" stroke="#6a6a6a" stroke-width="0.7"/>
<rect x="25.00" y="304.29" width="2.2" height="2.2" fill="none" stroke="#909090" stroke-width="0.45"/>
<rect x="28.20" y="304.69" width="23.94" height="1.70" fill="#858585"/>
<rect x="25.00" y="308.62" width="2.2" height="2.2" fill="none" stroke="#909090" stroke-width="0.45"/>
<rect x="28.20" y="309.02" width="23.29" height="1.70" fill="#858585"/>
<rect x="25.00" y="312.96" width="2.2" height="2.2" fill="none" stroke="#909090" stroke-width="0.45"/>
<rect x="28.20" y="313.36" width="23.46" height="1.70" fill="#858585"/>
<rect x="25.00" y="317.00" width="2.2" height="2.2" fill="none" stroke="#909090" stroke-width="0.45"/>
<rect x="28.20" y="317.40" width="22.36" height="1.70" fill="#858585"/>
<rect x="25.00" y="320.91" width="2.2" height="2.2" fill="none" stroke="#909090" stroke-width="0.45"/>
<rect x="28.20" y="321.31" width="15.17" height="1.70" fill="#858585"/>
<rect x="25.00" y="324.95" width="2.2" height="2.2" fill="none" stroke="#909090" stroke-width="0.45"/>
<rect x="28.20" y="325.35" width="19.25" height="1.70" fill="#858585"/>
<rect x="25.00" y="329.14" width="2.2" height="2.2" fill="none" stroke="#909090" stroke-width="0.45"/>
<rect x="28.20" y="329.54" width="16.98" height="1.70" fill="#858585"/>
<rect x="25.00" y="333.19" width="2.2" height="2.2" fill="none" stroke="#909090" stroke-width="0.45"/>
<rect x="28.20" y="333.59" width="12.41" height="1.70" fill="#858585"/>
<rect x="25.00" y="337.52" width="2.2" height="2.2" fill="none" stroke="#909090" stroke-width="0.45"/>
<rect x="28.20" y="337.92" width="12.39" height="1.70" fill="#858585"/>
<rect x="25.00" y="341.57" width="2.2" height="2.2" fill="none" stroke="#909090" stroke-width="0.45"/>
<rect x="28.20" y="341.97" width="15.91" height="1.70" fill="#858585"/>
<rect x="25.00" y="345.76" width="2.2" height="2.2" fill="none" stroke="#909090" stroke-width="0.45"/>
<rect x="28.20" y="346.16" width="15.63" height="1.70" fill="#858585"/>
<rect x="25.00" y="350.24" width="2.2" height="2.2" fill="none" stroke="#909090" stroke-width="0.45"/>
<rect x="28.20" y="350.64" width="21.70" height="1.70" fill="#858585"/>
<rect x="25.00" y="354.29" width="2.2" height="2.2" fill="none" stroke="#909090" stroke-width="0.45"/>
<rect x="28.20" y="354.69" width="25.39" height="1.70" fill="#858585"/>
<rect x="25.00" y="358.48" width="2.2" height="2.2" fill="none" stroke="#909090" stroke-width="0.45"/>
<rect x="28.20" y="358.88" width="18.26" height="1.70" fill="#858585"/>
<rect x="25.00" y="362.81" width="2.2" height="2.2" fill="none" stroke="#909090" stroke-width="0.45"/>
<rect x="28.20" y="363.21" width="25.12" height="1.70" fill="#858585"/>
<rect x="69.00" y="303.13" width="2.2" height="2.2" fill="none" stroke="#909090" stroke-width="0.45"/>
<rect x="72.20" y="303.53" width="19.88" height="1.70" fill="#858585"/>
<rect x="69.00" y="307.47" width="2.2" height="2.2" fill="none" stroke="#909090" stroke-width="0.45"/>
<rect x="72.20" y="307.87" width="19.55" height="1.70" fill="#858585"/>
<rect x="69.00" y="311.80" width="2.2" height="2.2" fill="none" stroke="#909090" stroke-width="0.45"/>
<rect x="72.20" y="312.20" width="13.65" height="1.70" fill="#858585"/>
<rect x="69.00" y="315.85" width="2.2" height="2.2" fill="none" stroke="#909090" stroke-width="0.45"/>
<rect x="72.20" y="316.25" width="12.20" height="1.70" fill="#858585"/>
<rect x="69.00" y="319.89" width="2.2" height="2.2" fill="none" stroke="#909090" stroke-width="0.45"/>
<rect x="72.20" y="320.29" width="12.27" height="1.70" fill="#858585"/>
<rect x="69.00" y="324.09" width="2.2" height="2.2" fill="none" stroke="#909090" stroke-width="0.45"/>
<rect x="72.20" y="324.49" width="11.97" height="1.70" fill="#858585"/>
<rect x="69.00" y="328.13" width="2.2" height="2.2" fill="none" stroke="#909090" stroke-width="0.45"/>
<rect x="72.20" y="328.53" width="12.04" height="1.70" fill="#858585"/>
<rect x="69.00" y="332.18" width="2.2" height="2.2" fill="none" stroke="#909090" stroke-width="0.45"/>
<rect x="72.20" y="332.58" width="16.24" height="1.70" fill="#858585"/>
<rect x="69.00" y="336.22" width="2.2" height="2.2" fill="none" stroke="#909090" stroke-width="0.45"/>
<rect x="72.20" y="336.62" width="19.00" height="1.70" fill="#858585"/>
<rect x="69.00" y="340.42" width="2.2" height="2.2" fill="none" stroke="#909090" stroke-width="0.45"/>
<rect x="72.20" y="340.82" width="18.40" height="1.70" fill="#858585"/>
<rect x="69.00" y="344.75" width="2.2" height="2.2" fill="none" stroke="#909090" stroke-width="0.45"/>
<rect x="72.20" y="345.15" width="14.79" height="1.70" fill="#858585"/>
<rect x="69.00" y="349.09" width="2.2" height="2.2" fill="none" stroke="#909090" stroke-width="0.45"/>
<rect x="72.20" y="349.49" width="16.53" height="1.70" fill="#858585"/>
<rect x="69.00" y="353.13" width="2.2" height="2.2" fill="none" stroke="#909090" stroke-width="0.45"/>
<rect x="72.20" y="353.53" width="18.00" height="1.70" fill="#858585"/>
<rect x="69.00" y="361.37" width="2.2" height="2.2" fill="none" stroke="#909090" stroke-width="0.45"/>
<rect x="72.20" y="361.77" width="10.85" height="1.70" fill="#858585"/>
<rect x="92.50" y="303.53" width="1.80" height="1.50" fill="#8a8a8a"/>
<rect x="100.00" y="303.53" width="1.60" height="1.50" fill="#a0a0a0"/>
<rect x="92.50" y="307.87" width="1.80" height="1.50" fill="#8a8a8a"/>
<rect x="100.00" y="307.87" width="1.60" height="1.50" fill="#a0a0a0"/>
<rect x="92.50" y="312.20" width="1.80" height="1.50" fill="#8a8a8a"/>
<rect x="100.00" y="312.20" width="1.60" height="1.50" fill="#a0a0a0"/>
<rect x="92.50" y="316.25" width="1.80" height="1.50" fill="#8a8a8a"/>
<rect x="100.00" y="316.25" width="1.60" height="1.50" fill="#a0a0a0"/>
<rect x="92.50" y="320.29" width="1.80" height="1.50" fill="#8a8a8a"/>
<rect x="100.00" y="320.29" width="1.60" height="1.50" fill="#a0a0a0"/>
<rect x="92.50" y="324.49" width="1.80" height="1.50" fill="#8a8a8a"/>
<rect x="100.00" y="324.49" width="1.60" height="1.50" fill="#a0a0a0"/>
<rect x="92.50" y="328.53" width="1.80" height="1.50" fill="#8a8a8a"/>
<rect x="100.00" y="328.53" width="1.60" height="1.50" fill="#a0a0a0"/>
<rect x="92.50" y="332.58" width="1.80" height="1.50" fill="#8a8a8a"/>
<rect x="100.00" y="332.58" width="1.60" height="1.50" fill="#a0a0a0"/>
<rect x="92.50" y="336.62" width="1.80" height="1.50" fill="#8a8a8a"/>
<rect x="100.00" y="336.62" width="1.60" height="1.50" fill="#a0a0a0"/>
<rect x="92.50" y="340.82" width="1.80" height="1.50" fill="#8a8a8a"/>
<rect x="100.00" y="340.82" width="1.60" height="1.50" fill="#a0a0a0"/>
<rect x="92.50" y="345.15" width="1.80" height="1.50" fill="#8a8a8a"/>
<rect x="100.00" y="345.15" width="1.60" height="1.50" fill="#a0a0a0"/>
<rect x="92.50" y="349.49" width="1.80" height="1.50" fill="#8a8a8a"/>
<rect x="100.00" y="349.49" width="1.60" height="1.50" fill="#a0a0a0"/>
<rect x="92.50" y="353.53" width="1.80" height="1.50" fill="#8a8a8a"/>
<rect x="100.00" y="353.53" width="1.60" height="1.50" fill="#a0a0a0"/>
<path d="M62 343.5 C62 337 101 337 101.5 343.5 C101 349 62 349 62 343.5 Z" fill="none" stroke="#222" stroke-width="0.7"/>
<rect x="113.50" y="313.80" width="84.10" height="6.00" fill="#0a0a0a"/>
<text x="115.00" y="318.50" font-family="Liberation Sans" font-weight="bold" font-size="4.3" fill="#dcdcdc">INTERVENTIONAL BIOPSY</text>
<rect x="114.00" y="319.50" width="84.00" height="20.00" fill="none" stroke="#6a6a6a" stroke-width="0.7"/>
<rect x="115.50" y="324.52" width="2.2" height="2.2" fill="none" stroke="#909090" stroke-width="0.45"/>
<rect x="118.70" y="324.92" width="10.66" height="1.70" fill="#858585"/>
<rect x="155.00" y="323.19" width="2.2" height="2.2" fill="none" stroke="#909090" stroke-width="0.45"/>
<rect x="158.20" y="323.59" width="10.91" height="1.70" fill="#858585"/>
<rect x="115.00" y="338.21" width="6.78" height="1.70" fill="#858585"/>
<rect x="114.40" y="342.50" width="83.90" height="7.00" fill="#0a0a0a"/>
<text x="115.90" y="348.20" font-family="Liberation Sans" font-weight="bold" font-size="4.3" fill="#dcdcdc">DEXA BONE DENSITOMETRY</text>
<rect x="115.00" y="349.00" width="83.50" height="13.60" fill="none" stroke="#6a6a6a" stroke-width="0.7"/>
<rect x="116.00" y="360.32" width="7.75" height="1.70" fill="#858585"/>
<line x1="225.50" y1="123.00" x2="225.50" y2="382.00" stroke="#2a2a2a" stroke-width="0.8"/>
<rect x="25.00" y="368.50" width="110.00" height="1.20" fill="#b4b4b4"/>
<rect x="25.00" y="371.50" width="142.00" height="1.20" fill="#b4b4b4"/>
<path d="M0 0 L1.2 0 L1.5 127 L3.5 267 L8.6 381.5 L0 381.5 Z" fill="#8a8a8a"/>
<path d="M0 0 L0.8 0 L1 127 L1.5 267 L3 381.5 L0 381.5 Z" fill="#5a5a5a"/>
<path d="M1 0 L39 0 Q24 2.5 1 2 Z" fill="#777"/>
<path d="M69 382 L296 375.5 L296 383 L69 383 Z" fill="#8c8c8c"/>
<path d="M69 382 L296 375.5" fill="none" stroke="#3a3a3a" stroke-width="1.2"/>
<path d="M0 381.5 L296 381.5 L296 383 L0 383 Z" fill="#202024"/></g></svg>
</body></html>
